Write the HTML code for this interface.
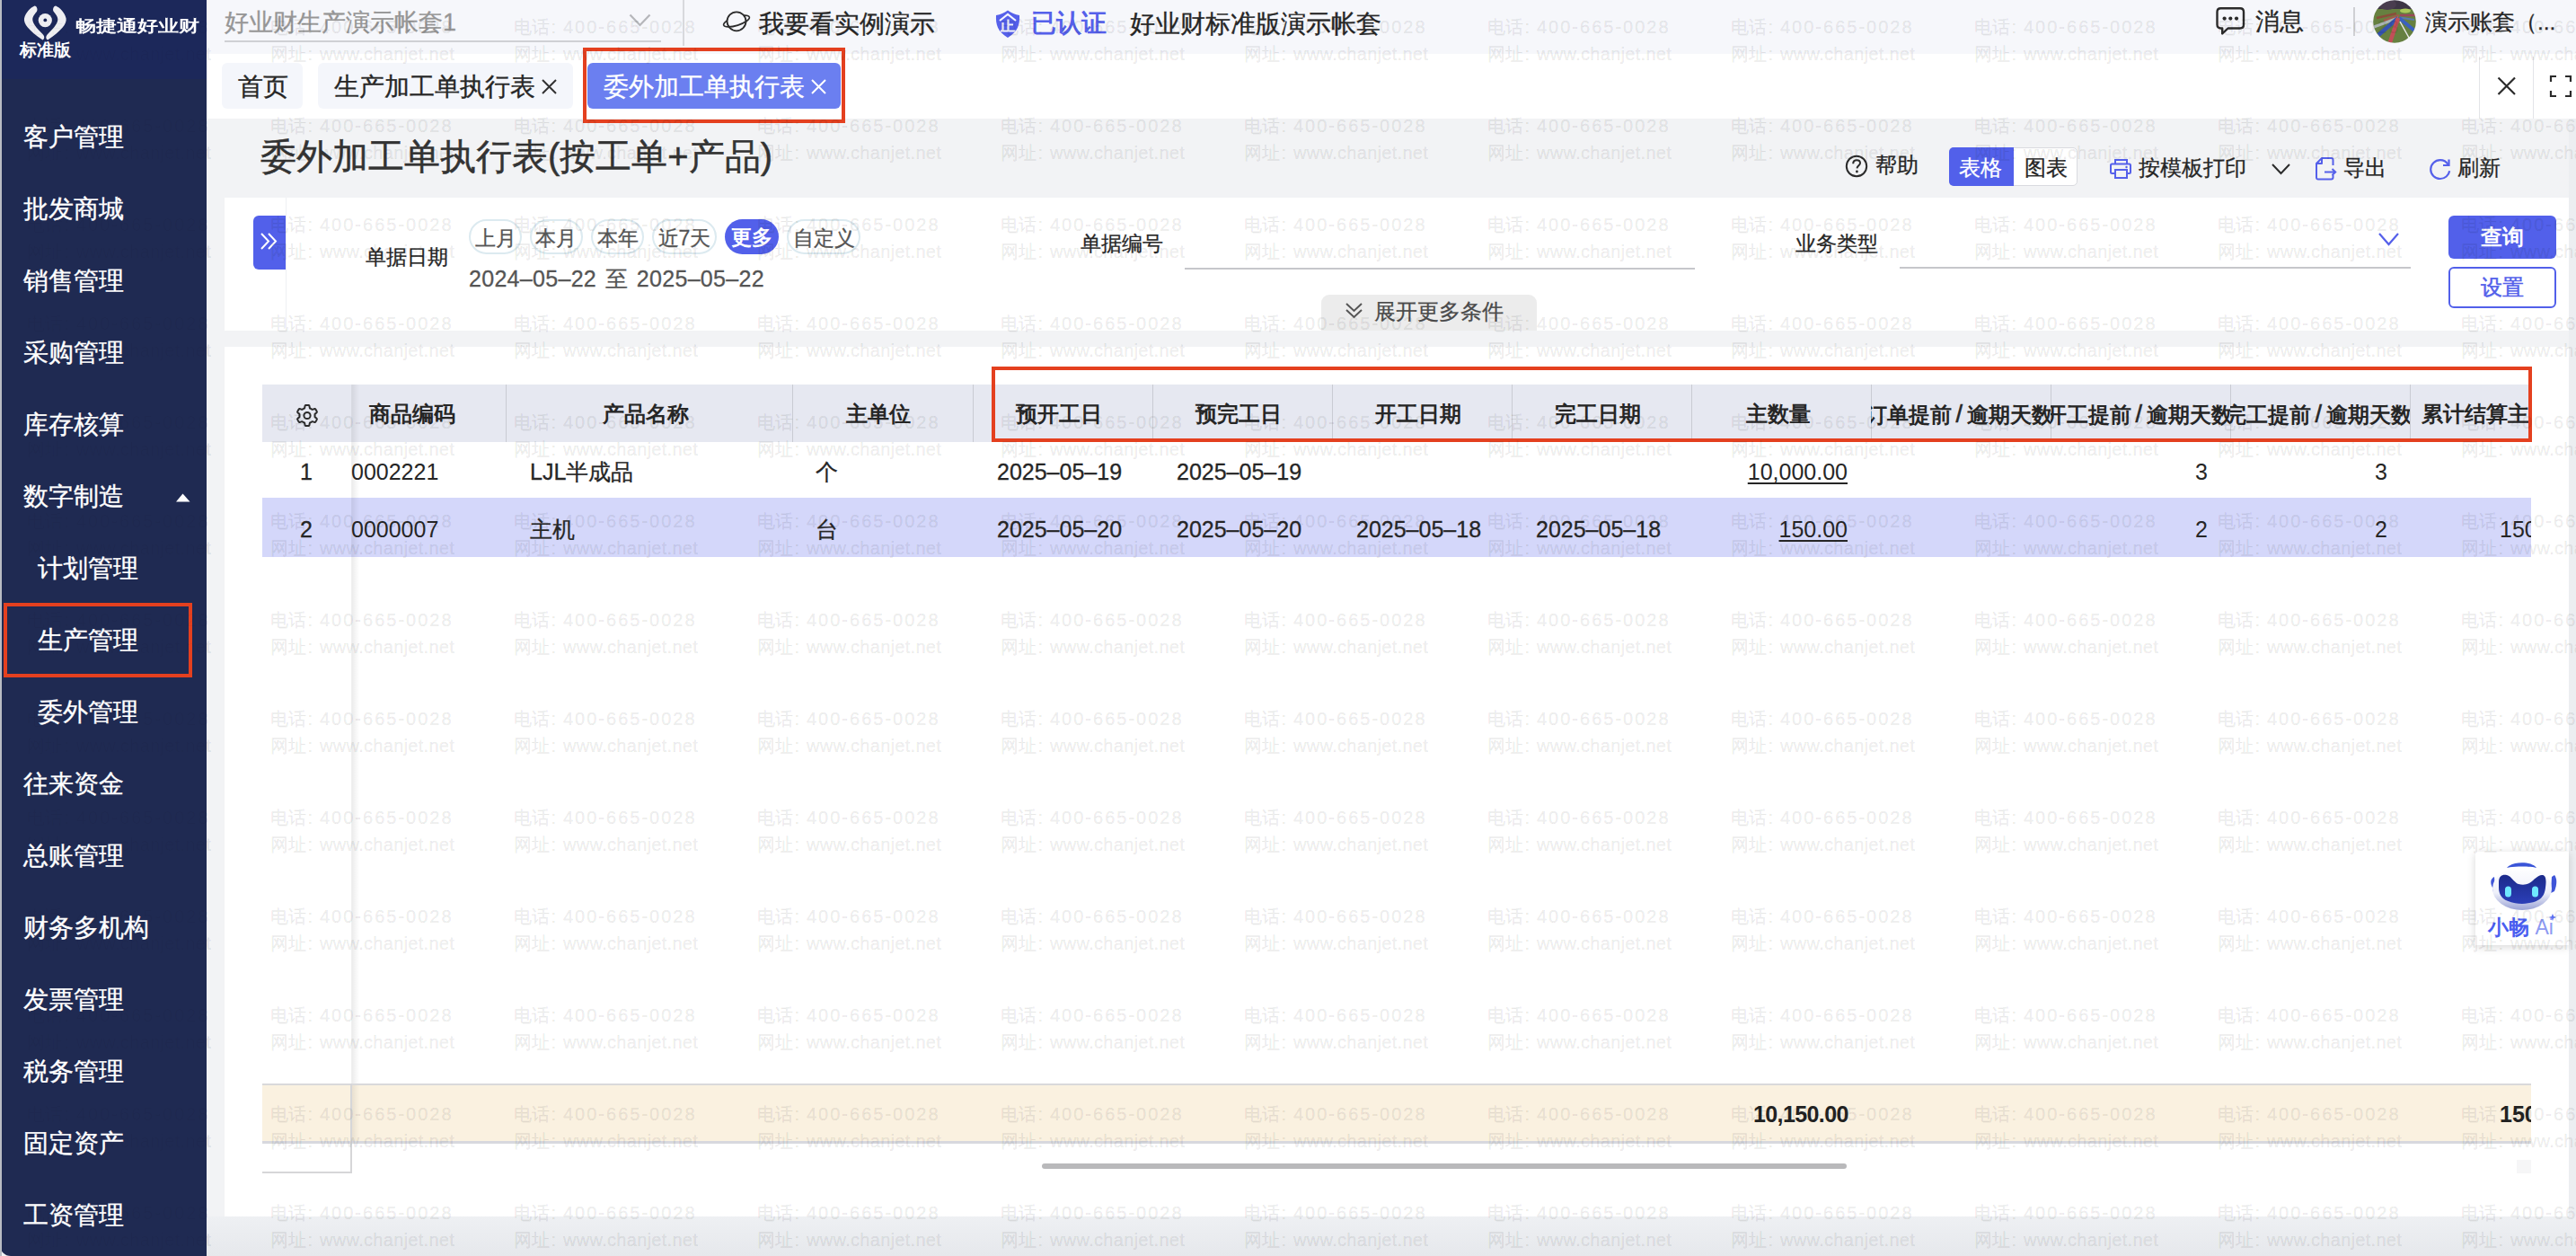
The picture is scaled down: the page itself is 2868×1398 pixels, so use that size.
<!DOCTYPE html><html><head><meta charset="utf-8"><style>
html,body{margin:0;padding:0;width:2868px;height:1398px;overflow:hidden;background:#f2f3f5;font-family:"Liberation Sans", sans-serif;}
.t{position:absolute;white-space:nowrap;}
.r{position:absolute;box-sizing:border-box;}
svg{position:absolute;overflow:visible;}
.wm{position:absolute;white-space:nowrap;font-size:20px;line-height:30px;color:rgba(0,0,0,0.07);-webkit-text-stroke:0.6px rgba(0,0,0,0.07);pointer-events:none;}
.wmc{position:absolute;left:230px;top:0;width:2638px;height:1398px;overflow:hidden;pointer-events:none;}
</style></head><body>

<div class="r" style="left:0px;top:0px;width:2868px;height:1398px;background:#f2f3f5"></div>
<div class="r" style="left:230px;top:0px;width:2638px;height:60px;background:#f6f7fb"></div>
<div class="r" style="left:230px;top:60px;width:2638px;height:72px;background:#ffffff"></div>
<div class="r" style="left:2860px;top:132px;width:8px;height:1266px;background:#eceef1"></div>
<div class="r" style="left:250px;top:220px;width:2610px;height:148px;background:#ffffff"></div>
<div class="r" style="left:250px;top:386px;width:2610px;height:968px;background:#ffffff"></div>
<div class="r" style="left:230px;top:1354px;width:2638px;height:44px;background:linear-gradient(#eef0f3,#e6e8ec)"></div>
<div class="r" style="left:0px;top:0px;width:230px;height:1398px;background:#1f2a52;border-bottom-left-radius:12px"></div>
<div class="r" style="left:0px;top:0px;width:230px;height:88px;background:#1c285a"></div>
<div class="r" style="left:0px;top:0px;width:2px;height:1398px;background:#b9bcc3"></div>
<svg style="left:0;top:0" width="230" height="88" viewBox="0 0 230 88">
<path d="M38.5 6.5 C34 8.5 28.5 14 27 20.5 C26 26.5 32 34 47.5 44.5 C49.5 43.5 50 41 48 38.5 C43 33.5 36.8 27.5 36.3 22.3 C36 18 39 15.5 41 12.7 C42.2 10.5 41.2 7 38.5 6.5 Z" fill="#eeeef2"/>
<path d="M62.1 6.5 C66.6 8.5 72.1 14 73.6 20.5 C74.6 26.5 68.6 34 53.1 44.5 C51.1 43.5 50.6 41 52.6 38.5 C57.6 33.5 63.8 27.5 64.3 22.3 C64.6 18 61.6 15.5 59.6 12.7 C58.4 10.5 59.4 7 62.1 6.5 Z" fill="#eeeef2"/>
<circle cx="50.3" cy="22.6" r="7.6" fill="#eeeef2"/><circle cx="50.3" cy="22.4" r="1.9" fill="#1b2657"/>
</svg>
<div class="t" style="left:22px;top:44px;font-size:18.5px;line-height:24px;color:#ffffff;font-weight:bold;">标准版</div>
<div class="t" style="left:84px;top:18px;font-size:22.5px;line-height:24px;color:#ffffff;font-weight:bold;letter-spacing:0px;transform:scaleY(0.78);transform-origin:0 50%">畅捷通好业财</div>
<div class="t" style="left:26px;top:133px;font-size:28px;line-height:40px;color:#ffffff;font-weight:normal;-webkit-text-stroke:0.34px #ffffff;">客户管理</div>
<div class="t" style="left:26px;top:213px;font-size:28px;line-height:40px;color:#ffffff;font-weight:normal;-webkit-text-stroke:0.34px #ffffff;">批发商城</div>
<div class="t" style="left:26px;top:293px;font-size:28px;line-height:40px;color:#ffffff;font-weight:normal;-webkit-text-stroke:0.34px #ffffff;">销售管理</div>
<div class="t" style="left:26px;top:373px;font-size:28px;line-height:40px;color:#ffffff;font-weight:normal;-webkit-text-stroke:0.34px #ffffff;">采购管理</div>
<div class="t" style="left:26px;top:453px;font-size:28px;line-height:40px;color:#ffffff;font-weight:normal;-webkit-text-stroke:0.34px #ffffff;">库存核算</div>
<div class="t" style="left:26px;top:533px;font-size:28px;line-height:40px;color:#ffffff;font-weight:normal;-webkit-text-stroke:0.34px #ffffff;">数字制造</div>
<div class="t" style="left:42px;top:613px;font-size:28px;line-height:40px;color:#ffffff;font-weight:normal;-webkit-text-stroke:0.34px #ffffff;">计划管理</div>
<div class="t" style="left:42px;top:693px;font-size:28px;line-height:40px;color:#ffffff;font-weight:normal;-webkit-text-stroke:0.34px #ffffff;">生产管理</div>
<div class="t" style="left:42px;top:773px;font-size:28px;line-height:40px;color:#ffffff;font-weight:normal;-webkit-text-stroke:0.34px #ffffff;">委外管理</div>
<div class="t" style="left:26px;top:853px;font-size:28px;line-height:40px;color:#ffffff;font-weight:normal;-webkit-text-stroke:0.34px #ffffff;">往来资金</div>
<div class="t" style="left:26px;top:933px;font-size:28px;line-height:40px;color:#ffffff;font-weight:normal;-webkit-text-stroke:0.34px #ffffff;">总账管理</div>
<div class="t" style="left:26px;top:1013px;font-size:28px;line-height:40px;color:#ffffff;font-weight:normal;-webkit-text-stroke:0.34px #ffffff;">财务多机构</div>
<div class="t" style="left:26px;top:1093px;font-size:28px;line-height:40px;color:#ffffff;font-weight:normal;-webkit-text-stroke:0.34px #ffffff;">发票管理</div>
<div class="t" style="left:26px;top:1173px;font-size:28px;line-height:40px;color:#ffffff;font-weight:normal;-webkit-text-stroke:0.34px #ffffff;">税务管理</div>
<div class="t" style="left:26px;top:1253px;font-size:28px;line-height:40px;color:#ffffff;font-weight:normal;-webkit-text-stroke:0.34px #ffffff;">固定资产</div>
<div class="t" style="left:26px;top:1333px;font-size:28px;line-height:40px;color:#ffffff;font-weight:normal;-webkit-text-stroke:0.34px #ffffff;">工资管理</div>
<svg style="left:195px;top:549px" width="18" height="10"><path d="M1 9.5 L8.5 0.5 L16.5 9.5 Z" fill="#ffffff"/></svg>
<div class="r" style="left:4px;top:671px;width:210px;height:83px;border:4px solid #e4401f"></div>
<div class="t" style="left:250px;top:5px;font-size:27px;line-height:40px;color:#969696;font-weight:normal;-webkit-text-stroke:0.32px #969696;">好业财生产演示帐套1</div>
<div class="r" style="left:250px;top:45px;width:486px;height:2px;background:#cfd0d4"></div>
<svg style="left:700px;top:15px" width="26" height="16"><path d="M1.5 1.5 L12.5 13 L23.5 1.5" fill="none" stroke="#b5b6ba" stroke-width="2.2"/></svg>
<div class="r" style="left:760px;top:0px;width:2px;height:51px;background:#d8d9dd"></div>
<svg style="left:800px;top:4px" width="40" height="40" viewBox="0 0 40 40">
<g transform="rotate(-17.5 20 19.5)"><path d="M5 19.5 A15 4.8 0 0 1 35 19.5" fill="none" stroke="#2b2b2b" stroke-width="1.7"/></g>
<circle cx="20" cy="19.8" r="10.5" fill="#f6f7fb" stroke="#2b2b2b" stroke-width="1.8"/>
<g transform="rotate(-17.5 20 19.5)"><path d="M5 19.5 A15 4.8 0 0 0 35 19.5" fill="none" stroke="#2b2b2b" stroke-width="1.7"/></g>
</svg>
<div class="t" style="left:845px;top:7px;font-size:28px;line-height:40px;color:#262626;font-weight:normal;-webkit-text-stroke:0.34px #262626;">我要看实例演示</div>
<svg style="left:1108px;top:11px" width="28" height="32" viewBox="0 0 28 32">
<path d="M14 0.5 C10 3.5 6 5 1 6 C0.5 16 2.5 24 14 31 C25.5 24 27.5 16 27 6 C22 5 18 3.5 14 0.5 Z" fill="#5560ea"/>
<path d="M5 12 L14 5 L23 12" fill="none" stroke="#f4f6ff" stroke-width="2.2"/>
<path d="M14.5 10.5 V23.5 M8.5 14 V23.5 M14.5 16.5 H20 M6 23.5 H22.5" fill="none" stroke="#f4f6ff" stroke-width="2.2"/>
</svg>
<div class="t" style="left:1148px;top:6px;font-size:28px;line-height:40px;color:#5560ea;font-weight:bold;">已认证</div>
<div class="t" style="left:1258px;top:7px;font-size:28px;line-height:40px;color:#262626;font-weight:normal;-webkit-text-stroke:0.34px #262626;">好业财标准版演示帐套</div>
<svg style="left:2466px;top:6px" width="36" height="36" viewBox="0 0 36 36">
<path d="M6.5 3.2 H28 C30.5 3.2 32 4.7 32 7.2 V21.5 C32 24 30.5 25.5 28 25.5 H14.5 L8.2 31.5 V25.5 H6.5 C4 25.5 2.5 24 2.5 21.5 V7.2 C2.5 4.7 4 3.2 6.5 3.2 Z" fill="none" stroke="#2b2b2b" stroke-width="2.4" stroke-linejoin="round"/>
<circle cx="10.6" cy="14.6" r="2.1" fill="#2b2b2b"/><circle cx="17.3" cy="14.6" r="2.1" fill="#2b2b2b"/><circle cx="24" cy="14.6" r="2.1" fill="#2b2b2b"/>
</svg>
<div class="t" style="left:2511px;top:4px;font-size:27px;line-height:40px;color:#262626;font-weight:normal;-webkit-text-stroke:0.32px #262626;">消息</div>
<div class="r" style="left:2620px;top:8px;width:2px;height:32px;background:#cfd0d4"></div>
<svg style="left:2642px;top:0px" width="48" height="48" viewBox="0 0 48 48">
<defs><clipPath id="av"><circle cx="24" cy="24" r="23.8"/></clipPath><filter id="bl"><feGaussianBlur stdDeviation="0.6"/></filter></defs>
<g clip-path="url(#av)"><g filter="url(#bl)">
<rect width="48" height="48" fill="#66803f"/>
<rect x="0" y="0" width="48" height="10" fill="#3d3444"/>
<ellipse cx="16" cy="5" rx="10" ry="6" fill="#4a3d50"/>
<ellipse cx="36" cy="12" rx="6" ry="2.5" fill="#a9c85a"/>
<path d="M26 15 L4 20" stroke="#8a4e3a" stroke-width="2.5"/>
<path d="M29 17 L12 23" stroke="#a05a48" stroke-width="2.5"/>
<path d="M30 17 L47 17" stroke="#9a4a5a" stroke-width="2.5"/>
<path d="M30 19.5 L46 22" stroke="#5a78b0" stroke-width="2"/>
<path d="M28 20 L1 30" stroke="#aab4b4" stroke-width="3"/>
<path d="M28 20 L6 39" stroke="#3553b0" stroke-width="4.5"/>
<path d="M29 20 L46 34" stroke="#3a60c0" stroke-width="4"/>
<path d="M30 24 L40 42" stroke="#e8e8e8" stroke-width="1.5"/>
<path d="M28 20 L19 47" stroke="#c25058" stroke-width="4.5"/>
</g></g></svg>
<div class="t" style="left:2700px;top:5px;font-size:24.5px;line-height:40px;color:#262626;font-weight:normal;-webkit-text-stroke:0.29px #262626;">演示账套（...</div>
<div class="r" style="left:247px;top:70px;width:90px;height:51px;background:#f4f6fb;border-radius:6px"></div>
<div class="t" style="left:265px;top:77px;font-size:28px;line-height:40px;color:#262626;font-weight:normal;-webkit-text-stroke:0.34px #262626;">首页</div>
<div class="r" style="left:354px;top:70px;width:284px;height:51px;background:#f4f6fb;border-radius:6px"></div>
<div class="t" style="left:372px;top:77px;font-size:28px;line-height:40px;color:#262626;font-weight:normal;-webkit-text-stroke:0.34px #262626;">生产加工单执行表</div>
<svg style="left:602px;top:87px" width="20" height="20"><path d="M2 2 L17 17 M17 2 L2 17" stroke="#333" stroke-width="2"/></svg>
<div class="r" style="left:654px;top:70px;width:282px;height:51px;background:#6b7ff0;border-radius:6px"></div>
<div class="t" style="left:672px;top:77px;font-size:28px;line-height:40px;color:#ffffff;font-weight:normal;-webkit-text-stroke:0.34px #ffffff;">委外加工单执行表</div>
<svg style="left:902px;top:87px" width="20" height="20"><path d="M2 2 L17 17 M17 2 L2 17" stroke="#fff" stroke-width="2"/></svg>
<div class="r" style="left:649px;top:53px;width:292px;height:84px;border:4.5px solid #e4401f"></div>
<div class="r" style="left:2760px;top:63px;width:1px;height:69px;background:#e3e4e8"></div>
<div class="r" style="left:2820px;top:63px;width:1px;height:69px;background:#e3e4e8"></div>
<svg style="left:2779px;top:84px" width="24" height="24"><path d="M2.5 2.5 L21 21 M21 2.5 L2.5 21" stroke="#2b2b2b" stroke-width="2.2"/></svg>
<svg style="left:2838px;top:83px" width="28" height="28"><path d="M2 8 V2 H8 M18 2 H24 V8 M24 18 V24 H18 M8 24 H2 V18" fill="none" stroke="#2b2b2b" stroke-width="2.2"/></svg>
<div class="t" style="left:290px;top:146px;font-size:40px;line-height:56px;color:#333;font-weight:normal;-webkit-text-stroke:0.48px #333;">委外加工单执行表(按工单+产品)</div>
<svg style="left:2054px;top:172px" width="28" height="28" viewBox="0 0 28 28">
<circle cx="13" cy="13" r="11.2" fill="none" stroke="#2b2b2b" stroke-width="2"/>
<path d="M9.2 10.3 C9.2 7.6 11 6.2 13.2 6.2 C15.4 6.2 17 7.7 17 9.6 C17 12 13.8 12.6 13.5 15.3" fill="none" stroke="#2b2b2b" stroke-width="2"/>
<circle cx="13.4" cy="19" r="1.4" fill="#2b2b2b"/>
</svg>
<div class="t" style="left:2088px;top:167px;font-size:24px;line-height:34px;color:#262626;font-weight:normal;-webkit-text-stroke:0.29px #262626;">帮助</div>
<div class="r" style="left:2170px;top:164px;width:143px;height:43px;background:#fff;border:1.5px solid #d9dadf;border-radius:5px"></div>
<div class="r" style="left:2170px;top:164px;width:72px;height:43px;background:#5260ea;border-radius:5px 0 0 5px"></div>
<div class="t" style="left:2181px;top:170px;font-size:24px;line-height:34px;color:#ffffff;font-weight:normal;-webkit-text-stroke:0.29px #ffffff;">表格</div>
<div class="t" style="left:2254px;top:170px;font-size:24px;line-height:34px;color:#262626;font-weight:normal;-webkit-text-stroke:0.29px #262626;">图表</div>
<svg style="left:2348px;top:176px" width="28" height="26" viewBox="0 0 28 26">
<path d="M7 6 V2 H20 V6" fill="none" stroke="#5560ea" stroke-width="2"/>
<path d="M6 17 H3.5 C2.5 17 2 16.5 2 15.5 V8 C2 7 2.5 6.5 3.5 6.5 H22.5 C23.5 6.5 24 7 24 8 V15.5 C24 16.5 23.5 17 22.5 17 H20" fill="none" stroke="#5560ea" stroke-width="2"/>
<rect x="7" y="13" width="13" height="9" fill="none" stroke="#5560ea" stroke-width="2"/>
<circle cx="19.5" cy="10" r="1.2" fill="#5560ea"/>
</svg>
<div class="t" style="left:2381px;top:170px;font-size:24px;line-height:34px;color:#262626;font-weight:normal;-webkit-text-stroke:0.29px #262626;">按模板打印</div>
<svg style="left:2528px;top:181px" width="24" height="16"><path d="M2 2 L11.5 12 L21 2" fill="none" stroke="#2b2b2b" stroke-width="2"/></svg>
<svg style="left:2577px;top:174px" width="26" height="28" viewBox="0 0 26 28">
<path d="M8 2 H18.5 C19.8 2 20.5 2.7 20.5 4 V10 M20.5 21 V23.5 C20.5 24.8 19.8 25.5 18.5 25.5 H4 C2.7 25.5 2 24.8 2 23.5 V8 L8 2 V8 H2" fill="none" stroke="#5560ea" stroke-width="2" stroke-linejoin="round"/>
<path d="M11 17.5 H23 M19.5 14 L23.2 17.5 L19.5 21" fill="none" stroke="#5560ea" stroke-width="2"/>
</svg>
<div class="t" style="left:2609px;top:170px;font-size:24px;line-height:34px;color:#262626;font-weight:normal;-webkit-text-stroke:0.29px #262626;">导出</div>
<svg style="left:2704px;top:176px" width="28" height="26" viewBox="0 0 28 26">
<path d="M21.5 7 C19.5 3.8 16.5 2.2 12.8 2.2 C7 2.2 2.2 6.8 2.2 12.6 C2.2 18.4 7 23 12.8 23 C18 23 22.3 19.3 23.2 14.3" fill="none" stroke="#5560ea" stroke-width="2.2"/>
<path d="M22.5 1.5 V8 H16" fill="none" stroke="#5560ea" stroke-width="2.2"/>
</svg>
<div class="t" style="left:2736px;top:170px;font-size:24px;line-height:34px;color:#262626;font-weight:normal;-webkit-text-stroke:0.29px #262626;">刷新</div>
<div class="r" style="left:318px;top:220px;width:1px;height:148px;background:#eef0f3"></div>
<div class="r" style="left:282px;top:240px;width:36px;height:60px;background:#5260ea;border-radius:6px 0 0 6px"></div>
<svg style="left:288px;top:257px" width="26" height="26"><path d="M3 3 L11 11.5 L3 20 M11 3 L19 11.5 L11 20" fill="none" stroke="#fff" stroke-width="2"/></svg>
<div class="t" style="left:407px;top:269px;font-size:23px;line-height:34px;color:#262626;font-weight:normal;-webkit-text-stroke:0.28px #262626;">单据日期</div>
<div class="r" style="left:522px;top:244px;width:59px;height:39px;border:2px solid #dceaf0;border-radius:20px"></div>
<div class="t" style="left:522px;top:246px;width:59px;text-align:center;font-size:23px;line-height:39px;color:#555;-webkit-text-stroke:0.3px #555">上月</div>
<div class="r" style="left:590px;top:244px;width:58.5px;height:39px;border:2px solid #dceaf0;border-radius:20px"></div>
<div class="t" style="left:590px;top:246px;width:58.5px;text-align:center;font-size:23px;line-height:39px;color:#555;-webkit-text-stroke:0.3px #555">本月</div>
<div class="r" style="left:658px;top:244px;width:59px;height:39px;border:2px solid #dceaf0;border-radius:20px"></div>
<div class="t" style="left:658px;top:246px;width:59px;text-align:center;font-size:23px;line-height:39px;color:#555;-webkit-text-stroke:0.3px #555">本年</div>
<div class="r" style="left:726px;top:244px;width:72px;height:39px;border:2px solid #dceaf0;border-radius:20px"></div>
<div class="t" style="left:726px;top:246px;width:72px;text-align:center;font-size:23px;line-height:39px;color:#555;-webkit-text-stroke:0.3px #555">近7天</div>
<div class="r" style="left:807px;top:244px;width:60px;height:39px;background:#5260ea;border-radius:20px"></div>
<div class="t" style="left:807px;top:245px;width:60px;text-align:center;font-size:23px;line-height:39px;color:#fff;font-weight:bold">更多</div>
<div class="r" style="left:876px;top:244px;width:82px;height:39px;border:2px solid #dceaf0;border-radius:20px"></div>
<div class="t" style="left:876px;top:246px;width:82px;text-align:center;font-size:23px;line-height:39px;color:#555;-webkit-text-stroke:0.3px #555">自定义</div>
<div class="t" style="left:522px;top:293px;font-size:25px;line-height:34px;color:#555;font-weight:normal;-webkit-text-stroke:0.30px #555;letter-spacing:0.3px;word-spacing:2.5px">2024–05–22 至 2025–05–22</div>
<div class="t" style="left:1203px;top:254px;font-size:23px;line-height:34px;color:#262626;font-weight:normal;-webkit-text-stroke:0.28px #262626;">单据编号</div>
<div class="r" style="left:1319px;top:298px;width:568px;height:2px;background:#c6c7cb"></div>
<div class="t" style="left:1999px;top:254px;font-size:23px;line-height:34px;color:#262626;font-weight:normal;-webkit-text-stroke:0.28px #262626;">业务类型</div>
<div class="r" style="left:2115px;top:297px;width:569px;height:2px;background:#c6c7cb"></div>
<svg style="left:2647px;top:258px" width="26" height="18"><path d="M2 2 L12.5 14 L23 2" fill="none" stroke="#5560ea" stroke-width="2.2"/></svg>
<div class="r" style="left:2726px;top:240px;width:120px;height:48px;background:#5260ea;border-radius:6px"></div>
<div class="t" style="left:2726px;top:240px;width:120px;text-align:center;font-size:24px;line-height:48px;color:#fff;font-weight:bold">查询</div>
<div class="r" style="left:2726px;top:297px;width:120px;height:46px;border:2px solid #5260ea;border-radius:6px;background:#fff"></div>
<div class="t" style="left:2726px;top:297px;width:120px;text-align:center;font-size:24px;line-height:46px;color:#5260ea;-webkit-text-stroke:0.5px #5260ea">设置</div>
<div class="r" style="left:1471px;top:328px;width:240px;height:40px;background:#ececec;border-radius:9px 9px 0 0"></div>
<svg style="left:1495px;top:334px" width="26" height="26"><path d="M4 4 L12.5 12 L21 4 M4 11 L12.5 19 L21 11" fill="none" stroke="#555" stroke-width="2"/></svg>
<div class="t" style="left:1530px;top:330px;font-size:24px;line-height:34px;color:#4a4a4a;font-weight:normal;-webkit-text-stroke:0.29px #4a4a4a;">展开更多条件</div>
<div class="r" style="left:292px;top:428px;width:2526px;height:64px;background:#e6e8f1"></div>
<div class="r" style="left:292px;top:492px;width:2526px;height:62px;background:#ffffff"></div>
<div class="r" style="left:292px;top:554px;width:2526px;height:66px;background:#d4d7fa"></div>
<div class="r" style="left:563px;top:428px;width:1px;height:64px;background:#c9cbd3"></div>
<div class="r" style="left:882px;top:428px;width:1px;height:64px;background:#c9cbd3"></div>
<div class="r" style="left:1083px;top:428px;width:1px;height:64px;background:#c9cbd3"></div>
<div class="r" style="left:1283px;top:428px;width:1px;height:64px;background:#c9cbd3"></div>
<div class="r" style="left:1483px;top:428px;width:1px;height:64px;background:#c9cbd3"></div>
<div class="r" style="left:1683px;top:428px;width:1px;height:64px;background:#c9cbd3"></div>
<div class="r" style="left:1883px;top:428px;width:1px;height:64px;background:#c9cbd3"></div>
<div class="r" style="left:2083px;top:428px;width:1px;height:64px;background:#c9cbd3"></div>
<div class="r" style="left:2283px;top:428px;width:1px;height:64px;background:#c9cbd3"></div>
<div class="r" style="left:2483px;top:428px;width:1px;height:64px;background:#c9cbd3"></div>
<div class="r" style="left:2683px;top:428px;width:1px;height:64px;background:#c9cbd3"></div>
<div class="t" style="left:411px;top:444px;font-size:24px;line-height:34px;color:#262626;font-weight:bold;">商品编码</div>
<div class="t" style="left:671px;top:444px;font-size:24px;line-height:34px;color:#262626;font-weight:bold;">产品名称</div>
<div class="t" style="left:942px;top:444px;font-size:24px;line-height:34px;color:#262626;font-weight:bold;">主单位</div>
<div class="t" style="left:1131px;top:444px;font-size:24px;line-height:34px;color:#262626;font-weight:bold;">预开工日</div>
<div class="t" style="left:1331px;top:444px;font-size:24px;line-height:34px;color:#262626;font-weight:bold;">预完工日</div>
<div class="t" style="left:1531px;top:444px;font-size:24px;line-height:34px;color:#262626;font-weight:bold;">开工日期</div>
<div class="t" style="left:1731px;top:444px;font-size:24px;line-height:34px;color:#262626;font-weight:bold;">完工日期</div>
<div class="t" style="left:1944px;top:444px;font-size:24px;line-height:34px;color:#262626;font-weight:bold;">主数量</div>
<div class="r" style="left:2083px;top:444px;width:200px;height:34px;overflow:hidden"><div class="t" style="left:-6px;top:0;font-size:24px;line-height:34px;color:#262626;font-weight:bold;">订单提前<span style="display:inline-block;width:16.7px;text-align:center;font-size:27px;font-weight:normal;-webkit-text-stroke:0.6px #262626">/</span>逾期天数</div></div>
<div class="r" style="left:2283px;top:444px;width:200px;height:34px;overflow:hidden"><div class="t" style="left:-6px;top:0;font-size:24px;line-height:34px;color:#262626;font-weight:bold;">开工提前<span style="display:inline-block;width:16.7px;text-align:center;font-size:27px;font-weight:normal;-webkit-text-stroke:0.6px #262626">/</span>逾期天数</div></div>
<div class="r" style="left:2483px;top:444px;width:200px;height:34px;overflow:hidden"><div class="t" style="left:-6px;top:0;font-size:24px;line-height:34px;color:#262626;font-weight:bold;">完工提前<span style="display:inline-block;width:16.7px;text-align:center;font-size:27px;font-weight:normal;-webkit-text-stroke:0.6px #262626">/</span>逾期天数</div></div>
<div class="r" style="left:2683px;top:444px;width:135px;height:34px;overflow:hidden"><div class="t" style="left:13px;top:0;font-size:24px;line-height:34px;color:#262626;font-weight:bold;">累计结算主数量</div></div>
<svg style="left:328px;top:448px" width="28" height="28" viewBox="0 0 28 28">
<path d="M12.19 3.04 L12.49 3.00 L12.79 2.96 L13.09 2.94 L13.39 2.92 L13.70 2.90 L14.00 2.90 L14.30 2.90 L14.61 2.92 L14.91 2.94 L15.21 2.96 L15.51 3.00 L15.81 3.04 L16.09 3.21 L16.32 3.58 L16.49 4.12 L16.61 4.74 L16.71 5.37 L16.79 5.90 L16.91 6.29 L17.08 6.47 L17.29 6.55 L17.50 6.64 L17.70 6.74 L17.90 6.84 L18.10 6.94 L18.30 7.05 L18.49 7.17 L18.68 7.29 L18.87 7.41 L19.05 7.54 L19.24 7.68 L19.41 7.82 L19.66 7.87 L20.05 7.78 L20.56 7.59 L21.14 7.36 L21.74 7.15 L22.29 7.03 L22.73 7.04 L23.01 7.20 L23.20 7.44 L23.38 7.68 L23.56 7.93 L23.73 8.18 L23.89 8.44 L24.05 8.70 L24.19 8.96 L24.34 9.23 L24.47 9.51 L24.60 9.78 L24.72 10.06 L24.83 10.34 L24.83 10.67 L24.61 11.05 L24.23 11.47 L23.76 11.89 L23.26 12.28 L22.84 12.62 L22.57 12.91 L22.49 13.15 L22.53 13.38 L22.55 13.60 L22.57 13.83 L22.59 14.05 L22.60 14.27 L22.60 14.50 L22.60 14.73 L22.59 14.95 L22.57 15.17 L22.55 15.40 L22.53 15.62 L22.49 15.85 L22.57 16.09 L22.84 16.38 L23.26 16.72 L23.76 17.11 L24.23 17.53 L24.61 17.95 L24.83 18.33 L24.83 18.66 L24.72 18.94 L24.60 19.22 L24.47 19.49 L24.34 19.77 L24.19 20.04 L24.05 20.30 L23.89 20.56 L23.73 20.82 L23.56 21.07 L23.38 21.32 L23.20 21.56 L23.01 21.80 L22.73 21.96 L22.29 21.97 L21.74 21.85 L21.14 21.64 L20.56 21.41 L20.05 21.22 L19.66 21.13 L19.41 21.18 L19.24 21.32 L19.05 21.46 L18.87 21.59 L18.68 21.71 L18.49 21.83 L18.30 21.95 L18.10 22.06 L17.90 22.16 L17.70 22.26 L17.50 22.36 L17.29 22.45 L17.08 22.53 L16.91 22.71 L16.79 23.10 L16.71 23.63 L16.61 24.26 L16.49 24.88 L16.32 25.42 L16.09 25.79 L15.81 25.96 L15.51 26.00 L15.21 26.04 L14.91 26.06 L14.61 26.08 L14.30 26.10 L14.00 26.10 L13.70 26.10 L13.39 26.08 L13.09 26.06 L12.79 26.04 L12.49 26.00 L12.19 25.96 L11.91 25.79 L11.68 25.42 L11.51 24.88 L11.39 24.26 L11.29 23.63 L11.21 23.10 L11.09 22.71 L10.92 22.53 L10.71 22.45 L10.50 22.36 L10.30 22.26 L10.10 22.16 L9.90 22.06 L9.70 21.95 L9.51 21.83 L9.32 21.71 L9.13 21.59 L8.95 21.46 L8.76 21.32 L8.59 21.18 L8.34 21.13 L7.95 21.22 L7.44 21.41 L6.86 21.64 L6.26 21.85 L5.71 21.97 L5.27 21.96 L4.99 21.80 L4.80 21.56 L4.62 21.32 L4.44 21.07 L4.27 20.82 L4.11 20.56 L3.95 20.30 L3.81 20.04 L3.66 19.77 L3.53 19.49 L3.40 19.22 L3.28 18.94 L3.17 18.66 L3.17 18.33 L3.39 17.95 L3.77 17.53 L4.24 17.11 L4.74 16.72 L5.16 16.38 L5.43 16.09 L5.51 15.85 L5.47 15.62 L5.45 15.40 L5.43 15.17 L5.41 14.95 L5.40 14.73 L5.40 14.50 L5.40 14.27 L5.41 14.05 L5.43 13.83 L5.45 13.60 L5.47 13.38 L5.51 13.15 L5.43 12.91 L5.16 12.62 L4.74 12.28 L4.24 11.89 L3.77 11.47 L3.39 11.05 L3.17 10.67 L3.17 10.34 L3.28 10.06 L3.40 9.78 L3.53 9.51 L3.66 9.23 L3.81 8.96 L3.95 8.70 L4.11 8.44 L4.27 8.18 L4.44 7.93 L4.62 7.68 L4.80 7.44 L4.99 7.20 L5.27 7.04 L5.71 7.03 L6.26 7.15 L6.86 7.36 L7.44 7.59 L7.95 7.78 L8.34 7.87 L8.59 7.82 L8.76 7.68 L8.95 7.54 L9.13 7.41 L9.32 7.29 L9.51 7.17 L9.70 7.05 L9.90 6.94 L10.10 6.84 L10.30 6.74 L10.50 6.64 L10.71 6.55 L10.92 6.47 L11.09 6.29 L11.21 5.90 L11.29 5.37 L11.39 4.74 L11.51 4.12 L11.68 3.58 L11.91 3.21 Z" fill="none" stroke="#2b2b2b" stroke-width="2" stroke-linejoin="round"/>
<circle cx="14" cy="14.5" r="3.6" fill="none" stroke="#2b2b2b" stroke-width="2"/>
</svg>
<div class="t" style="left:334px;top:508px;font-size:25px;line-height:34px;color:#262626;font-weight:normal;-webkit-text-stroke:0.30px #262626;">1</div>
<div class="r" style="left:390px;top:508px;width:173px;height:34px;overflow:hidden"><div class="t" style="left:1px;top:0;font-size:25px;line-height:34px;color:#262626;font-weight:normal;">0002221</div></div>
<div class="t" style="left:590px;top:508px;font-size:25px;line-height:34px;color:#262626;font-weight:normal;-webkit-text-stroke:0.30px #262626;">LJL半成品</div>
<div class="t" style="left:908px;top:508px;font-size:25px;line-height:34px;color:#262626;font-weight:normal;-webkit-text-stroke:0.30px #262626;">个</div>
<div class="t" style="left:1110px;top:508px;font-size:25px;line-height:34px;color:#262626;font-weight:normal;-webkit-text-stroke:0.30px #262626;">2025–05–19</div>
<div class="t" style="left:1310px;top:508px;font-size:25px;line-height:34px;color:#262626;font-weight:normal;-webkit-text-stroke:0.30px #262626;">2025–05–19</div>
<div class="t" style="left:1883px;top:508px;width:174px;text-align:right;font-size:25px;line-height:34px;color:#262626;text-decoration:underline;text-underline-offset:3px">10,000.00</div>
<div class="t" style="left:2283px;top:508px;width:175px;text-align:right;font-size:25px;line-height:34px;color:#262626">3</div>
<div class="t" style="left:2483px;top:508px;width:175px;text-align:right;font-size:25px;line-height:34px;color:#262626">3</div>
<div class="t" style="left:334px;top:572px;font-size:25px;line-height:34px;color:#262626;font-weight:normal;-webkit-text-stroke:0.30px #262626;">2</div>
<div class="r" style="left:390px;top:572px;width:173px;height:34px;overflow:hidden"><div class="t" style="left:1px;top:0;font-size:25px;line-height:34px;color:#262626;font-weight:normal;">0000007</div></div>
<div class="t" style="left:590px;top:572px;font-size:25px;line-height:34px;color:#262626;font-weight:normal;-webkit-text-stroke:0.30px #262626;">主机</div>
<div class="t" style="left:908px;top:572px;font-size:25px;line-height:34px;color:#262626;font-weight:normal;-webkit-text-stroke:0.30px #262626;">台</div>
<div class="t" style="left:1110px;top:572px;font-size:25px;line-height:34px;color:#262626;font-weight:normal;-webkit-text-stroke:0.30px #262626;">2025–05–20</div>
<div class="t" style="left:1310px;top:572px;font-size:25px;line-height:34px;color:#262626;font-weight:normal;-webkit-text-stroke:0.30px #262626;">2025–05–20</div>
<div class="t" style="left:1510px;top:572px;font-size:25px;line-height:34px;color:#262626;font-weight:normal;-webkit-text-stroke:0.30px #262626;">2025–05–18</div>
<div class="t" style="left:1710px;top:572px;font-size:25px;line-height:34px;color:#262626;font-weight:normal;-webkit-text-stroke:0.30px #262626;">2025–05–18</div>
<div class="t" style="left:1883px;top:572px;width:174px;text-align:right;font-size:25px;line-height:34px;color:#262626;text-decoration:underline;text-underline-offset:3px">150.00</div>
<div class="t" style="left:2283px;top:572px;width:175px;text-align:right;font-size:25px;line-height:34px;color:#262626">2</div>
<div class="t" style="left:2483px;top:572px;width:175px;text-align:right;font-size:25px;line-height:34px;color:#262626">2</div>
<div class="r" style="left:2683px;top:572px;width:135px;height:34px;overflow:hidden"><div class="t" style="left:100px;top:0;font-size:25px;line-height:34px;color:#262626;font-weight:normal;">150</div></div>
<div class="r" style="left:392px;top:428px;width:8px;height:844px;background:linear-gradient(90deg,rgba(0,0,0,0.075),rgba(0,0,0,0))"></div>
<div class="r" style="left:391px;top:428px;width:1px;height:844px;background:rgba(0,0,0,0.06)"></div>
<div class="r" style="left:292px;top:1206px;width:2526px;height:2px;background:#d9d9db"></div>
<div class="r" style="left:292px;top:1208px;width:2526px;height:62px;background:#faf1e0"></div>
<div class="r" style="left:392px;top:1208px;width:8px;height:62px;background:linear-gradient(90deg,rgba(0,0,0,0.07),rgba(0,0,0,0))"></div>
<div class="r" style="left:292px;top:1270px;width:2526px;height:3px;background:#d7d8de"></div>
<div class="t" style="left:1952px;top:1223px;font-size:25px;line-height:34px;color:#222;font-weight:bold;letter-spacing:-0.6px">10,150.00</div>
<div class="r" style="left:2683px;top:1223px;width:135px;height:34px;overflow:hidden"><div class="t" style="left:100px;top:0;font-size:25px;line-height:34px;color:#222;font-weight:bold;">150</div></div>
<div class="r" style="left:390px;top:1206px;width:2px;height:100px;background:#d6d6d8"></div>
<div class="r" style="left:292px;top:1304px;width:100px;height:2px;background:#d6d6d8"></div>
<div class="r" style="left:1160px;top:1295px;width:896px;height:6px;background:#b9b9bb;border-radius:3px"></div>
<div class="r" style="left:2802px;top:1291px;width:16px;height:15px;background:#f6f6f7"></div>
<div class="r" style="left:1104px;top:408px;width:1715px;height:84px;border:4.5px solid #e4401f"></div>
<div class="r" style="left:2756px;top:948px;width:104px;height:104px;background:#fff;box-shadow:0 2px 9px rgba(0,0,0,0.16)"></div>
<svg style="left:2756px;top:948px" width="104" height="104" viewBox="0 0 104 104">
<defs><linearGradient id="hg" x1="0" y1="0" x2="0" y2="1"><stop offset="0" stop-color="#ffffff"/><stop offset="0.6" stop-color="#eef0fa"/><stop offset="1" stop-color="#9aa3d6"/></linearGradient>
<linearGradient id="vg" x1="0" y1="0" x2="0" y2="1"><stop offset="0" stop-color="#1b2a8a"/><stop offset="1" stop-color="#2b3fb8"/></linearGradient>
<linearGradient id="tg" x1="0" y1="0" x2="1" y2="0"><stop offset="0" stop-color="#4a5ef0"/><stop offset="0.6" stop-color="#5a6ff2"/><stop offset="1" stop-color="#b4bdf5"/></linearGradient></defs>
<path d="M19 40 C16 34 17 30 21 28 L23 48 C20 46 19 43 19 40 Z" fill="#3f55d8"/>
<path d="M88 26 C91 30 91 36 88 44 L84 46 L85 28 Z" fill="#3f55d8"/>
<ellipse cx="52" cy="41" rx="33" ry="24" fill="url(#hg)"/>
<path d="M35 18 C40 11 62 10 68 18 C62 16 42 16 35 18 Z" fill="#3a55d8"/>
<path d="M26 34 C26 27 30 25 35 26 C40 27 43 34 48 36 C52 37 56 37 60 35 C66 31 70 25 75 26 C79 27 79 33 78 40 C77 50 72 57 52 58 C32 57 26 50 26 40 Z" fill="url(#vg)"/>
<rect x="33" y="38.5" width="7" height="12" rx="3.5" fill="#6fe8ff"/>
<rect x="63" y="38.5" width="7" height="12" rx="3.5" fill="#6fe8ff"/>
<path d="M86 69 L87.2 72 L90.2 73 L87.2 74 L86 77 L84.8 74 L81.8 73 L84.8 72 Z" fill="#5a6ff2"/>
</svg>
<div class="t" style="left:2770px;top:1017px;font-size:23px;line-height:30px;font-weight:bold;color:#4a5ef0;letter-spacing:0px">小畅 <span style="font-weight:normal;color:#8d9af2">Ai</span></div>
<div class="wmc">
<div class="wm" style="left:-200.5px;top:14.6px">电话<span style="display:inline-block;width:15.5px;padding-left:2px;box-sizing:border-box">:</span><span style="letter-spacing:2.0px">400-665-0028</span><br>网址<span style="display:inline-block;width:15.5px;padding-left:2px;box-sizing:border-box">:</span><span style="letter-spacing:0.3px">www.chanjet.net</span></div>
<div class="wm" style="left:70.5px;top:14.6px">电话<span style="display:inline-block;width:15.5px;padding-left:2px;box-sizing:border-box">:</span><span style="letter-spacing:2.0px">400-665-0028</span><br>网址<span style="display:inline-block;width:15.5px;padding-left:2px;box-sizing:border-box">:</span><span style="letter-spacing:0.3px">www.chanjet.net</span></div>
<div class="wm" style="left:341.5px;top:14.6px">电话<span style="display:inline-block;width:15.5px;padding-left:2px;box-sizing:border-box">:</span><span style="letter-spacing:2.0px">400-665-0028</span><br>网址<span style="display:inline-block;width:15.5px;padding-left:2px;box-sizing:border-box">:</span><span style="letter-spacing:0.3px">www.chanjet.net</span></div>
<div class="wm" style="left:612.5px;top:14.6px">电话<span style="display:inline-block;width:15.5px;padding-left:2px;box-sizing:border-box">:</span><span style="letter-spacing:2.0px">400-665-0028</span><br>网址<span style="display:inline-block;width:15.5px;padding-left:2px;box-sizing:border-box">:</span><span style="letter-spacing:0.3px">www.chanjet.net</span></div>
<div class="wm" style="left:883.5px;top:14.6px">电话<span style="display:inline-block;width:15.5px;padding-left:2px;box-sizing:border-box">:</span><span style="letter-spacing:2.0px">400-665-0028</span><br>网址<span style="display:inline-block;width:15.5px;padding-left:2px;box-sizing:border-box">:</span><span style="letter-spacing:0.3px">www.chanjet.net</span></div>
<div class="wm" style="left:1154.5px;top:14.6px">电话<span style="display:inline-block;width:15.5px;padding-left:2px;box-sizing:border-box">:</span><span style="letter-spacing:2.0px">400-665-0028</span><br>网址<span style="display:inline-block;width:15.5px;padding-left:2px;box-sizing:border-box">:</span><span style="letter-spacing:0.3px">www.chanjet.net</span></div>
<div class="wm" style="left:1425.5px;top:14.6px">电话<span style="display:inline-block;width:15.5px;padding-left:2px;box-sizing:border-box">:</span><span style="letter-spacing:2.0px">400-665-0028</span><br>网址<span style="display:inline-block;width:15.5px;padding-left:2px;box-sizing:border-box">:</span><span style="letter-spacing:0.3px">www.chanjet.net</span></div>
<div class="wm" style="left:1696.5px;top:14.6px">电话<span style="display:inline-block;width:15.5px;padding-left:2px;box-sizing:border-box">:</span><span style="letter-spacing:2.0px">400-665-0028</span><br>网址<span style="display:inline-block;width:15.5px;padding-left:2px;box-sizing:border-box">:</span><span style="letter-spacing:0.3px">www.chanjet.net</span></div>
<div class="wm" style="left:1967.5px;top:14.6px">电话<span style="display:inline-block;width:15.5px;padding-left:2px;box-sizing:border-box">:</span><span style="letter-spacing:2.0px">400-665-0028</span><br>网址<span style="display:inline-block;width:15.5px;padding-left:2px;box-sizing:border-box">:</span><span style="letter-spacing:0.3px">www.chanjet.net</span></div>
<div class="wm" style="left:2238.5px;top:14.6px">电话<span style="display:inline-block;width:15.5px;padding-left:2px;box-sizing:border-box">:</span><span style="letter-spacing:2.0px">400-665-0028</span><br>网址<span style="display:inline-block;width:15.5px;padding-left:2px;box-sizing:border-box">:</span><span style="letter-spacing:0.3px">www.chanjet.net</span></div>
<div class="wm" style="left:2509.5px;top:14.6px">电话<span style="display:inline-block;width:15.5px;padding-left:2px;box-sizing:border-box">:</span><span style="letter-spacing:2.0px">400-665-0028</span><br>网址<span style="display:inline-block;width:15.5px;padding-left:2px;box-sizing:border-box">:</span><span style="letter-spacing:0.3px">www.chanjet.net</span></div>
<div class="wm" style="left:-200.5px;top:124.6px">电话<span style="display:inline-block;width:15.5px;padding-left:2px;box-sizing:border-box">:</span><span style="letter-spacing:2.0px">400-665-0028</span><br>网址<span style="display:inline-block;width:15.5px;padding-left:2px;box-sizing:border-box">:</span><span style="letter-spacing:0.3px">www.chanjet.net</span></div>
<div class="wm" style="left:70.5px;top:124.6px">电话<span style="display:inline-block;width:15.5px;padding-left:2px;box-sizing:border-box">:</span><span style="letter-spacing:2.0px">400-665-0028</span><br>网址<span style="display:inline-block;width:15.5px;padding-left:2px;box-sizing:border-box">:</span><span style="letter-spacing:0.3px">www.chanjet.net</span></div>
<div class="wm" style="left:341.5px;top:124.6px">电话<span style="display:inline-block;width:15.5px;padding-left:2px;box-sizing:border-box">:</span><span style="letter-spacing:2.0px">400-665-0028</span><br>网址<span style="display:inline-block;width:15.5px;padding-left:2px;box-sizing:border-box">:</span><span style="letter-spacing:0.3px">www.chanjet.net</span></div>
<div class="wm" style="left:612.5px;top:124.6px">电话<span style="display:inline-block;width:15.5px;padding-left:2px;box-sizing:border-box">:</span><span style="letter-spacing:2.0px">400-665-0028</span><br>网址<span style="display:inline-block;width:15.5px;padding-left:2px;box-sizing:border-box">:</span><span style="letter-spacing:0.3px">www.chanjet.net</span></div>
<div class="wm" style="left:883.5px;top:124.6px">电话<span style="display:inline-block;width:15.5px;padding-left:2px;box-sizing:border-box">:</span><span style="letter-spacing:2.0px">400-665-0028</span><br>网址<span style="display:inline-block;width:15.5px;padding-left:2px;box-sizing:border-box">:</span><span style="letter-spacing:0.3px">www.chanjet.net</span></div>
<div class="wm" style="left:1154.5px;top:124.6px">电话<span style="display:inline-block;width:15.5px;padding-left:2px;box-sizing:border-box">:</span><span style="letter-spacing:2.0px">400-665-0028</span><br>网址<span style="display:inline-block;width:15.5px;padding-left:2px;box-sizing:border-box">:</span><span style="letter-spacing:0.3px">www.chanjet.net</span></div>
<div class="wm" style="left:1425.5px;top:124.6px">电话<span style="display:inline-block;width:15.5px;padding-left:2px;box-sizing:border-box">:</span><span style="letter-spacing:2.0px">400-665-0028</span><br>网址<span style="display:inline-block;width:15.5px;padding-left:2px;box-sizing:border-box">:</span><span style="letter-spacing:0.3px">www.chanjet.net</span></div>
<div class="wm" style="left:1696.5px;top:124.6px">电话<span style="display:inline-block;width:15.5px;padding-left:2px;box-sizing:border-box">:</span><span style="letter-spacing:2.0px">400-665-0028</span><br>网址<span style="display:inline-block;width:15.5px;padding-left:2px;box-sizing:border-box">:</span><span style="letter-spacing:0.3px">www.chanjet.net</span></div>
<div class="wm" style="left:1967.5px;top:124.6px">电话<span style="display:inline-block;width:15.5px;padding-left:2px;box-sizing:border-box">:</span><span style="letter-spacing:2.0px">400-665-0028</span><br>网址<span style="display:inline-block;width:15.5px;padding-left:2px;box-sizing:border-box">:</span><span style="letter-spacing:0.3px">www.chanjet.net</span></div>
<div class="wm" style="left:2238.5px;top:124.6px">电话<span style="display:inline-block;width:15.5px;padding-left:2px;box-sizing:border-box">:</span><span style="letter-spacing:2.0px">400-665-0028</span><br>网址<span style="display:inline-block;width:15.5px;padding-left:2px;box-sizing:border-box">:</span><span style="letter-spacing:0.3px">www.chanjet.net</span></div>
<div class="wm" style="left:2509.5px;top:124.6px">电话<span style="display:inline-block;width:15.5px;padding-left:2px;box-sizing:border-box">:</span><span style="letter-spacing:2.0px">400-665-0028</span><br>网址<span style="display:inline-block;width:15.5px;padding-left:2px;box-sizing:border-box">:</span><span style="letter-spacing:0.3px">www.chanjet.net</span></div>
<div class="wm" style="left:-200.5px;top:234.6px">电话<span style="display:inline-block;width:15.5px;padding-left:2px;box-sizing:border-box">:</span><span style="letter-spacing:2.0px">400-665-0028</span><br>网址<span style="display:inline-block;width:15.5px;padding-left:2px;box-sizing:border-box">:</span><span style="letter-spacing:0.3px">www.chanjet.net</span></div>
<div class="wm" style="left:70.5px;top:234.6px">电话<span style="display:inline-block;width:15.5px;padding-left:2px;box-sizing:border-box">:</span><span style="letter-spacing:2.0px">400-665-0028</span><br>网址<span style="display:inline-block;width:15.5px;padding-left:2px;box-sizing:border-box">:</span><span style="letter-spacing:0.3px">www.chanjet.net</span></div>
<div class="wm" style="left:341.5px;top:234.6px">电话<span style="display:inline-block;width:15.5px;padding-left:2px;box-sizing:border-box">:</span><span style="letter-spacing:2.0px">400-665-0028</span><br>网址<span style="display:inline-block;width:15.5px;padding-left:2px;box-sizing:border-box">:</span><span style="letter-spacing:0.3px">www.chanjet.net</span></div>
<div class="wm" style="left:612.5px;top:234.6px">电话<span style="display:inline-block;width:15.5px;padding-left:2px;box-sizing:border-box">:</span><span style="letter-spacing:2.0px">400-665-0028</span><br>网址<span style="display:inline-block;width:15.5px;padding-left:2px;box-sizing:border-box">:</span><span style="letter-spacing:0.3px">www.chanjet.net</span></div>
<div class="wm" style="left:883.5px;top:234.6px">电话<span style="display:inline-block;width:15.5px;padding-left:2px;box-sizing:border-box">:</span><span style="letter-spacing:2.0px">400-665-0028</span><br>网址<span style="display:inline-block;width:15.5px;padding-left:2px;box-sizing:border-box">:</span><span style="letter-spacing:0.3px">www.chanjet.net</span></div>
<div class="wm" style="left:1154.5px;top:234.6px">电话<span style="display:inline-block;width:15.5px;padding-left:2px;box-sizing:border-box">:</span><span style="letter-spacing:2.0px">400-665-0028</span><br>网址<span style="display:inline-block;width:15.5px;padding-left:2px;box-sizing:border-box">:</span><span style="letter-spacing:0.3px">www.chanjet.net</span></div>
<div class="wm" style="left:1425.5px;top:234.6px">电话<span style="display:inline-block;width:15.5px;padding-left:2px;box-sizing:border-box">:</span><span style="letter-spacing:2.0px">400-665-0028</span><br>网址<span style="display:inline-block;width:15.5px;padding-left:2px;box-sizing:border-box">:</span><span style="letter-spacing:0.3px">www.chanjet.net</span></div>
<div class="wm" style="left:1696.5px;top:234.6px">电话<span style="display:inline-block;width:15.5px;padding-left:2px;box-sizing:border-box">:</span><span style="letter-spacing:2.0px">400-665-0028</span><br>网址<span style="display:inline-block;width:15.5px;padding-left:2px;box-sizing:border-box">:</span><span style="letter-spacing:0.3px">www.chanjet.net</span></div>
<div class="wm" style="left:1967.5px;top:234.6px">电话<span style="display:inline-block;width:15.5px;padding-left:2px;box-sizing:border-box">:</span><span style="letter-spacing:2.0px">400-665-0028</span><br>网址<span style="display:inline-block;width:15.5px;padding-left:2px;box-sizing:border-box">:</span><span style="letter-spacing:0.3px">www.chanjet.net</span></div>
<div class="wm" style="left:2238.5px;top:234.6px">电话<span style="display:inline-block;width:15.5px;padding-left:2px;box-sizing:border-box">:</span><span style="letter-spacing:2.0px">400-665-0028</span><br>网址<span style="display:inline-block;width:15.5px;padding-left:2px;box-sizing:border-box">:</span><span style="letter-spacing:0.3px">www.chanjet.net</span></div>
<div class="wm" style="left:2509.5px;top:234.6px">电话<span style="display:inline-block;width:15.5px;padding-left:2px;box-sizing:border-box">:</span><span style="letter-spacing:2.0px">400-665-0028</span><br>网址<span style="display:inline-block;width:15.5px;padding-left:2px;box-sizing:border-box">:</span><span style="letter-spacing:0.3px">www.chanjet.net</span></div>
<div class="wm" style="left:-200.5px;top:344.6px">电话<span style="display:inline-block;width:15.5px;padding-left:2px;box-sizing:border-box">:</span><span style="letter-spacing:2.0px">400-665-0028</span><br>网址<span style="display:inline-block;width:15.5px;padding-left:2px;box-sizing:border-box">:</span><span style="letter-spacing:0.3px">www.chanjet.net</span></div>
<div class="wm" style="left:70.5px;top:344.6px">电话<span style="display:inline-block;width:15.5px;padding-left:2px;box-sizing:border-box">:</span><span style="letter-spacing:2.0px">400-665-0028</span><br>网址<span style="display:inline-block;width:15.5px;padding-left:2px;box-sizing:border-box">:</span><span style="letter-spacing:0.3px">www.chanjet.net</span></div>
<div class="wm" style="left:341.5px;top:344.6px">电话<span style="display:inline-block;width:15.5px;padding-left:2px;box-sizing:border-box">:</span><span style="letter-spacing:2.0px">400-665-0028</span><br>网址<span style="display:inline-block;width:15.5px;padding-left:2px;box-sizing:border-box">:</span><span style="letter-spacing:0.3px">www.chanjet.net</span></div>
<div class="wm" style="left:612.5px;top:344.6px">电话<span style="display:inline-block;width:15.5px;padding-left:2px;box-sizing:border-box">:</span><span style="letter-spacing:2.0px">400-665-0028</span><br>网址<span style="display:inline-block;width:15.5px;padding-left:2px;box-sizing:border-box">:</span><span style="letter-spacing:0.3px">www.chanjet.net</span></div>
<div class="wm" style="left:883.5px;top:344.6px">电话<span style="display:inline-block;width:15.5px;padding-left:2px;box-sizing:border-box">:</span><span style="letter-spacing:2.0px">400-665-0028</span><br>网址<span style="display:inline-block;width:15.5px;padding-left:2px;box-sizing:border-box">:</span><span style="letter-spacing:0.3px">www.chanjet.net</span></div>
<div class="wm" style="left:1154.5px;top:344.6px">电话<span style="display:inline-block;width:15.5px;padding-left:2px;box-sizing:border-box">:</span><span style="letter-spacing:2.0px">400-665-0028</span><br>网址<span style="display:inline-block;width:15.5px;padding-left:2px;box-sizing:border-box">:</span><span style="letter-spacing:0.3px">www.chanjet.net</span></div>
<div class="wm" style="left:1425.5px;top:344.6px">电话<span style="display:inline-block;width:15.5px;padding-left:2px;box-sizing:border-box">:</span><span style="letter-spacing:2.0px">400-665-0028</span><br>网址<span style="display:inline-block;width:15.5px;padding-left:2px;box-sizing:border-box">:</span><span style="letter-spacing:0.3px">www.chanjet.net</span></div>
<div class="wm" style="left:1696.5px;top:344.6px">电话<span style="display:inline-block;width:15.5px;padding-left:2px;box-sizing:border-box">:</span><span style="letter-spacing:2.0px">400-665-0028</span><br>网址<span style="display:inline-block;width:15.5px;padding-left:2px;box-sizing:border-box">:</span><span style="letter-spacing:0.3px">www.chanjet.net</span></div>
<div class="wm" style="left:1967.5px;top:344.6px">电话<span style="display:inline-block;width:15.5px;padding-left:2px;box-sizing:border-box">:</span><span style="letter-spacing:2.0px">400-665-0028</span><br>网址<span style="display:inline-block;width:15.5px;padding-left:2px;box-sizing:border-box">:</span><span style="letter-spacing:0.3px">www.chanjet.net</span></div>
<div class="wm" style="left:2238.5px;top:344.6px">电话<span style="display:inline-block;width:15.5px;padding-left:2px;box-sizing:border-box">:</span><span style="letter-spacing:2.0px">400-665-0028</span><br>网址<span style="display:inline-block;width:15.5px;padding-left:2px;box-sizing:border-box">:</span><span style="letter-spacing:0.3px">www.chanjet.net</span></div>
<div class="wm" style="left:2509.5px;top:344.6px">电话<span style="display:inline-block;width:15.5px;padding-left:2px;box-sizing:border-box">:</span><span style="letter-spacing:2.0px">400-665-0028</span><br>网址<span style="display:inline-block;width:15.5px;padding-left:2px;box-sizing:border-box">:</span><span style="letter-spacing:0.3px">www.chanjet.net</span></div>
<div class="wm" style="left:-200.5px;top:454.6px">电话<span style="display:inline-block;width:15.5px;padding-left:2px;box-sizing:border-box">:</span><span style="letter-spacing:2.0px">400-665-0028</span><br>网址<span style="display:inline-block;width:15.5px;padding-left:2px;box-sizing:border-box">:</span><span style="letter-spacing:0.3px">www.chanjet.net</span></div>
<div class="wm" style="left:70.5px;top:454.6px">电话<span style="display:inline-block;width:15.5px;padding-left:2px;box-sizing:border-box">:</span><span style="letter-spacing:2.0px">400-665-0028</span><br>网址<span style="display:inline-block;width:15.5px;padding-left:2px;box-sizing:border-box">:</span><span style="letter-spacing:0.3px">www.chanjet.net</span></div>
<div class="wm" style="left:341.5px;top:454.6px">电话<span style="display:inline-block;width:15.5px;padding-left:2px;box-sizing:border-box">:</span><span style="letter-spacing:2.0px">400-665-0028</span><br>网址<span style="display:inline-block;width:15.5px;padding-left:2px;box-sizing:border-box">:</span><span style="letter-spacing:0.3px">www.chanjet.net</span></div>
<div class="wm" style="left:612.5px;top:454.6px">电话<span style="display:inline-block;width:15.5px;padding-left:2px;box-sizing:border-box">:</span><span style="letter-spacing:2.0px">400-665-0028</span><br>网址<span style="display:inline-block;width:15.5px;padding-left:2px;box-sizing:border-box">:</span><span style="letter-spacing:0.3px">www.chanjet.net</span></div>
<div class="wm" style="left:883.5px;top:454.6px">电话<span style="display:inline-block;width:15.5px;padding-left:2px;box-sizing:border-box">:</span><span style="letter-spacing:2.0px">400-665-0028</span><br>网址<span style="display:inline-block;width:15.5px;padding-left:2px;box-sizing:border-box">:</span><span style="letter-spacing:0.3px">www.chanjet.net</span></div>
<div class="wm" style="left:1154.5px;top:454.6px">电话<span style="display:inline-block;width:15.5px;padding-left:2px;box-sizing:border-box">:</span><span style="letter-spacing:2.0px">400-665-0028</span><br>网址<span style="display:inline-block;width:15.5px;padding-left:2px;box-sizing:border-box">:</span><span style="letter-spacing:0.3px">www.chanjet.net</span></div>
<div class="wm" style="left:1425.5px;top:454.6px">电话<span style="display:inline-block;width:15.5px;padding-left:2px;box-sizing:border-box">:</span><span style="letter-spacing:2.0px">400-665-0028</span><br>网址<span style="display:inline-block;width:15.5px;padding-left:2px;box-sizing:border-box">:</span><span style="letter-spacing:0.3px">www.chanjet.net</span></div>
<div class="wm" style="left:1696.5px;top:454.6px">电话<span style="display:inline-block;width:15.5px;padding-left:2px;box-sizing:border-box">:</span><span style="letter-spacing:2.0px">400-665-0028</span><br>网址<span style="display:inline-block;width:15.5px;padding-left:2px;box-sizing:border-box">:</span><span style="letter-spacing:0.3px">www.chanjet.net</span></div>
<div class="wm" style="left:1967.5px;top:454.6px">电话<span style="display:inline-block;width:15.5px;padding-left:2px;box-sizing:border-box">:</span><span style="letter-spacing:2.0px">400-665-0028</span><br>网址<span style="display:inline-block;width:15.5px;padding-left:2px;box-sizing:border-box">:</span><span style="letter-spacing:0.3px">www.chanjet.net</span></div>
<div class="wm" style="left:2238.5px;top:454.6px">电话<span style="display:inline-block;width:15.5px;padding-left:2px;box-sizing:border-box">:</span><span style="letter-spacing:2.0px">400-665-0028</span><br>网址<span style="display:inline-block;width:15.5px;padding-left:2px;box-sizing:border-box">:</span><span style="letter-spacing:0.3px">www.chanjet.net</span></div>
<div class="wm" style="left:2509.5px;top:454.6px">电话<span style="display:inline-block;width:15.5px;padding-left:2px;box-sizing:border-box">:</span><span style="letter-spacing:2.0px">400-665-0028</span><br>网址<span style="display:inline-block;width:15.5px;padding-left:2px;box-sizing:border-box">:</span><span style="letter-spacing:0.3px">www.chanjet.net</span></div>
<div class="wm" style="left:-200.5px;top:564.6px">电话<span style="display:inline-block;width:15.5px;padding-left:2px;box-sizing:border-box">:</span><span style="letter-spacing:2.0px">400-665-0028</span><br>网址<span style="display:inline-block;width:15.5px;padding-left:2px;box-sizing:border-box">:</span><span style="letter-spacing:0.3px">www.chanjet.net</span></div>
<div class="wm" style="left:70.5px;top:564.6px">电话<span style="display:inline-block;width:15.5px;padding-left:2px;box-sizing:border-box">:</span><span style="letter-spacing:2.0px">400-665-0028</span><br>网址<span style="display:inline-block;width:15.5px;padding-left:2px;box-sizing:border-box">:</span><span style="letter-spacing:0.3px">www.chanjet.net</span></div>
<div class="wm" style="left:341.5px;top:564.6px">电话<span style="display:inline-block;width:15.5px;padding-left:2px;box-sizing:border-box">:</span><span style="letter-spacing:2.0px">400-665-0028</span><br>网址<span style="display:inline-block;width:15.5px;padding-left:2px;box-sizing:border-box">:</span><span style="letter-spacing:0.3px">www.chanjet.net</span></div>
<div class="wm" style="left:612.5px;top:564.6px">电话<span style="display:inline-block;width:15.5px;padding-left:2px;box-sizing:border-box">:</span><span style="letter-spacing:2.0px">400-665-0028</span><br>网址<span style="display:inline-block;width:15.5px;padding-left:2px;box-sizing:border-box">:</span><span style="letter-spacing:0.3px">www.chanjet.net</span></div>
<div class="wm" style="left:883.5px;top:564.6px">电话<span style="display:inline-block;width:15.5px;padding-left:2px;box-sizing:border-box">:</span><span style="letter-spacing:2.0px">400-665-0028</span><br>网址<span style="display:inline-block;width:15.5px;padding-left:2px;box-sizing:border-box">:</span><span style="letter-spacing:0.3px">www.chanjet.net</span></div>
<div class="wm" style="left:1154.5px;top:564.6px">电话<span style="display:inline-block;width:15.5px;padding-left:2px;box-sizing:border-box">:</span><span style="letter-spacing:2.0px">400-665-0028</span><br>网址<span style="display:inline-block;width:15.5px;padding-left:2px;box-sizing:border-box">:</span><span style="letter-spacing:0.3px">www.chanjet.net</span></div>
<div class="wm" style="left:1425.5px;top:564.6px">电话<span style="display:inline-block;width:15.5px;padding-left:2px;box-sizing:border-box">:</span><span style="letter-spacing:2.0px">400-665-0028</span><br>网址<span style="display:inline-block;width:15.5px;padding-left:2px;box-sizing:border-box">:</span><span style="letter-spacing:0.3px">www.chanjet.net</span></div>
<div class="wm" style="left:1696.5px;top:564.6px">电话<span style="display:inline-block;width:15.5px;padding-left:2px;box-sizing:border-box">:</span><span style="letter-spacing:2.0px">400-665-0028</span><br>网址<span style="display:inline-block;width:15.5px;padding-left:2px;box-sizing:border-box">:</span><span style="letter-spacing:0.3px">www.chanjet.net</span></div>
<div class="wm" style="left:1967.5px;top:564.6px">电话<span style="display:inline-block;width:15.5px;padding-left:2px;box-sizing:border-box">:</span><span style="letter-spacing:2.0px">400-665-0028</span><br>网址<span style="display:inline-block;width:15.5px;padding-left:2px;box-sizing:border-box">:</span><span style="letter-spacing:0.3px">www.chanjet.net</span></div>
<div class="wm" style="left:2238.5px;top:564.6px">电话<span style="display:inline-block;width:15.5px;padding-left:2px;box-sizing:border-box">:</span><span style="letter-spacing:2.0px">400-665-0028</span><br>网址<span style="display:inline-block;width:15.5px;padding-left:2px;box-sizing:border-box">:</span><span style="letter-spacing:0.3px">www.chanjet.net</span></div>
<div class="wm" style="left:2509.5px;top:564.6px">电话<span style="display:inline-block;width:15.5px;padding-left:2px;box-sizing:border-box">:</span><span style="letter-spacing:2.0px">400-665-0028</span><br>网址<span style="display:inline-block;width:15.5px;padding-left:2px;box-sizing:border-box">:</span><span style="letter-spacing:0.3px">www.chanjet.net</span></div>
<div class="wm" style="left:-200.5px;top:674.6px">电话<span style="display:inline-block;width:15.5px;padding-left:2px;box-sizing:border-box">:</span><span style="letter-spacing:2.0px">400-665-0028</span><br>网址<span style="display:inline-block;width:15.5px;padding-left:2px;box-sizing:border-box">:</span><span style="letter-spacing:0.3px">www.chanjet.net</span></div>
<div class="wm" style="left:70.5px;top:674.6px">电话<span style="display:inline-block;width:15.5px;padding-left:2px;box-sizing:border-box">:</span><span style="letter-spacing:2.0px">400-665-0028</span><br>网址<span style="display:inline-block;width:15.5px;padding-left:2px;box-sizing:border-box">:</span><span style="letter-spacing:0.3px">www.chanjet.net</span></div>
<div class="wm" style="left:341.5px;top:674.6px">电话<span style="display:inline-block;width:15.5px;padding-left:2px;box-sizing:border-box">:</span><span style="letter-spacing:2.0px">400-665-0028</span><br>网址<span style="display:inline-block;width:15.5px;padding-left:2px;box-sizing:border-box">:</span><span style="letter-spacing:0.3px">www.chanjet.net</span></div>
<div class="wm" style="left:612.5px;top:674.6px">电话<span style="display:inline-block;width:15.5px;padding-left:2px;box-sizing:border-box">:</span><span style="letter-spacing:2.0px">400-665-0028</span><br>网址<span style="display:inline-block;width:15.5px;padding-left:2px;box-sizing:border-box">:</span><span style="letter-spacing:0.3px">www.chanjet.net</span></div>
<div class="wm" style="left:883.5px;top:674.6px">电话<span style="display:inline-block;width:15.5px;padding-left:2px;box-sizing:border-box">:</span><span style="letter-spacing:2.0px">400-665-0028</span><br>网址<span style="display:inline-block;width:15.5px;padding-left:2px;box-sizing:border-box">:</span><span style="letter-spacing:0.3px">www.chanjet.net</span></div>
<div class="wm" style="left:1154.5px;top:674.6px">电话<span style="display:inline-block;width:15.5px;padding-left:2px;box-sizing:border-box">:</span><span style="letter-spacing:2.0px">400-665-0028</span><br>网址<span style="display:inline-block;width:15.5px;padding-left:2px;box-sizing:border-box">:</span><span style="letter-spacing:0.3px">www.chanjet.net</span></div>
<div class="wm" style="left:1425.5px;top:674.6px">电话<span style="display:inline-block;width:15.5px;padding-left:2px;box-sizing:border-box">:</span><span style="letter-spacing:2.0px">400-665-0028</span><br>网址<span style="display:inline-block;width:15.5px;padding-left:2px;box-sizing:border-box">:</span><span style="letter-spacing:0.3px">www.chanjet.net</span></div>
<div class="wm" style="left:1696.5px;top:674.6px">电话<span style="display:inline-block;width:15.5px;padding-left:2px;box-sizing:border-box">:</span><span style="letter-spacing:2.0px">400-665-0028</span><br>网址<span style="display:inline-block;width:15.5px;padding-left:2px;box-sizing:border-box">:</span><span style="letter-spacing:0.3px">www.chanjet.net</span></div>
<div class="wm" style="left:1967.5px;top:674.6px">电话<span style="display:inline-block;width:15.5px;padding-left:2px;box-sizing:border-box">:</span><span style="letter-spacing:2.0px">400-665-0028</span><br>网址<span style="display:inline-block;width:15.5px;padding-left:2px;box-sizing:border-box">:</span><span style="letter-spacing:0.3px">www.chanjet.net</span></div>
<div class="wm" style="left:2238.5px;top:674.6px">电话<span style="display:inline-block;width:15.5px;padding-left:2px;box-sizing:border-box">:</span><span style="letter-spacing:2.0px">400-665-0028</span><br>网址<span style="display:inline-block;width:15.5px;padding-left:2px;box-sizing:border-box">:</span><span style="letter-spacing:0.3px">www.chanjet.net</span></div>
<div class="wm" style="left:2509.5px;top:674.6px">电话<span style="display:inline-block;width:15.5px;padding-left:2px;box-sizing:border-box">:</span><span style="letter-spacing:2.0px">400-665-0028</span><br>网址<span style="display:inline-block;width:15.5px;padding-left:2px;box-sizing:border-box">:</span><span style="letter-spacing:0.3px">www.chanjet.net</span></div>
<div class="wm" style="left:-200.5px;top:784.6px">电话<span style="display:inline-block;width:15.5px;padding-left:2px;box-sizing:border-box">:</span><span style="letter-spacing:2.0px">400-665-0028</span><br>网址<span style="display:inline-block;width:15.5px;padding-left:2px;box-sizing:border-box">:</span><span style="letter-spacing:0.3px">www.chanjet.net</span></div>
<div class="wm" style="left:70.5px;top:784.6px">电话<span style="display:inline-block;width:15.5px;padding-left:2px;box-sizing:border-box">:</span><span style="letter-spacing:2.0px">400-665-0028</span><br>网址<span style="display:inline-block;width:15.5px;padding-left:2px;box-sizing:border-box">:</span><span style="letter-spacing:0.3px">www.chanjet.net</span></div>
<div class="wm" style="left:341.5px;top:784.6px">电话<span style="display:inline-block;width:15.5px;padding-left:2px;box-sizing:border-box">:</span><span style="letter-spacing:2.0px">400-665-0028</span><br>网址<span style="display:inline-block;width:15.5px;padding-left:2px;box-sizing:border-box">:</span><span style="letter-spacing:0.3px">www.chanjet.net</span></div>
<div class="wm" style="left:612.5px;top:784.6px">电话<span style="display:inline-block;width:15.5px;padding-left:2px;box-sizing:border-box">:</span><span style="letter-spacing:2.0px">400-665-0028</span><br>网址<span style="display:inline-block;width:15.5px;padding-left:2px;box-sizing:border-box">:</span><span style="letter-spacing:0.3px">www.chanjet.net</span></div>
<div class="wm" style="left:883.5px;top:784.6px">电话<span style="display:inline-block;width:15.5px;padding-left:2px;box-sizing:border-box">:</span><span style="letter-spacing:2.0px">400-665-0028</span><br>网址<span style="display:inline-block;width:15.5px;padding-left:2px;box-sizing:border-box">:</span><span style="letter-spacing:0.3px">www.chanjet.net</span></div>
<div class="wm" style="left:1154.5px;top:784.6px">电话<span style="display:inline-block;width:15.5px;padding-left:2px;box-sizing:border-box">:</span><span style="letter-spacing:2.0px">400-665-0028</span><br>网址<span style="display:inline-block;width:15.5px;padding-left:2px;box-sizing:border-box">:</span><span style="letter-spacing:0.3px">www.chanjet.net</span></div>
<div class="wm" style="left:1425.5px;top:784.6px">电话<span style="display:inline-block;width:15.5px;padding-left:2px;box-sizing:border-box">:</span><span style="letter-spacing:2.0px">400-665-0028</span><br>网址<span style="display:inline-block;width:15.5px;padding-left:2px;box-sizing:border-box">:</span><span style="letter-spacing:0.3px">www.chanjet.net</span></div>
<div class="wm" style="left:1696.5px;top:784.6px">电话<span style="display:inline-block;width:15.5px;padding-left:2px;box-sizing:border-box">:</span><span style="letter-spacing:2.0px">400-665-0028</span><br>网址<span style="display:inline-block;width:15.5px;padding-left:2px;box-sizing:border-box">:</span><span style="letter-spacing:0.3px">www.chanjet.net</span></div>
<div class="wm" style="left:1967.5px;top:784.6px">电话<span style="display:inline-block;width:15.5px;padding-left:2px;box-sizing:border-box">:</span><span style="letter-spacing:2.0px">400-665-0028</span><br>网址<span style="display:inline-block;width:15.5px;padding-left:2px;box-sizing:border-box">:</span><span style="letter-spacing:0.3px">www.chanjet.net</span></div>
<div class="wm" style="left:2238.5px;top:784.6px">电话<span style="display:inline-block;width:15.5px;padding-left:2px;box-sizing:border-box">:</span><span style="letter-spacing:2.0px">400-665-0028</span><br>网址<span style="display:inline-block;width:15.5px;padding-left:2px;box-sizing:border-box">:</span><span style="letter-spacing:0.3px">www.chanjet.net</span></div>
<div class="wm" style="left:2509.5px;top:784.6px">电话<span style="display:inline-block;width:15.5px;padding-left:2px;box-sizing:border-box">:</span><span style="letter-spacing:2.0px">400-665-0028</span><br>网址<span style="display:inline-block;width:15.5px;padding-left:2px;box-sizing:border-box">:</span><span style="letter-spacing:0.3px">www.chanjet.net</span></div>
<div class="wm" style="left:-200.5px;top:894.6px">电话<span style="display:inline-block;width:15.5px;padding-left:2px;box-sizing:border-box">:</span><span style="letter-spacing:2.0px">400-665-0028</span><br>网址<span style="display:inline-block;width:15.5px;padding-left:2px;box-sizing:border-box">:</span><span style="letter-spacing:0.3px">www.chanjet.net</span></div>
<div class="wm" style="left:70.5px;top:894.6px">电话<span style="display:inline-block;width:15.5px;padding-left:2px;box-sizing:border-box">:</span><span style="letter-spacing:2.0px">400-665-0028</span><br>网址<span style="display:inline-block;width:15.5px;padding-left:2px;box-sizing:border-box">:</span><span style="letter-spacing:0.3px">www.chanjet.net</span></div>
<div class="wm" style="left:341.5px;top:894.6px">电话<span style="display:inline-block;width:15.5px;padding-left:2px;box-sizing:border-box">:</span><span style="letter-spacing:2.0px">400-665-0028</span><br>网址<span style="display:inline-block;width:15.5px;padding-left:2px;box-sizing:border-box">:</span><span style="letter-spacing:0.3px">www.chanjet.net</span></div>
<div class="wm" style="left:612.5px;top:894.6px">电话<span style="display:inline-block;width:15.5px;padding-left:2px;box-sizing:border-box">:</span><span style="letter-spacing:2.0px">400-665-0028</span><br>网址<span style="display:inline-block;width:15.5px;padding-left:2px;box-sizing:border-box">:</span><span style="letter-spacing:0.3px">www.chanjet.net</span></div>
<div class="wm" style="left:883.5px;top:894.6px">电话<span style="display:inline-block;width:15.5px;padding-left:2px;box-sizing:border-box">:</span><span style="letter-spacing:2.0px">400-665-0028</span><br>网址<span style="display:inline-block;width:15.5px;padding-left:2px;box-sizing:border-box">:</span><span style="letter-spacing:0.3px">www.chanjet.net</span></div>
<div class="wm" style="left:1154.5px;top:894.6px">电话<span style="display:inline-block;width:15.5px;padding-left:2px;box-sizing:border-box">:</span><span style="letter-spacing:2.0px">400-665-0028</span><br>网址<span style="display:inline-block;width:15.5px;padding-left:2px;box-sizing:border-box">:</span><span style="letter-spacing:0.3px">www.chanjet.net</span></div>
<div class="wm" style="left:1425.5px;top:894.6px">电话<span style="display:inline-block;width:15.5px;padding-left:2px;box-sizing:border-box">:</span><span style="letter-spacing:2.0px">400-665-0028</span><br>网址<span style="display:inline-block;width:15.5px;padding-left:2px;box-sizing:border-box">:</span><span style="letter-spacing:0.3px">www.chanjet.net</span></div>
<div class="wm" style="left:1696.5px;top:894.6px">电话<span style="display:inline-block;width:15.5px;padding-left:2px;box-sizing:border-box">:</span><span style="letter-spacing:2.0px">400-665-0028</span><br>网址<span style="display:inline-block;width:15.5px;padding-left:2px;box-sizing:border-box">:</span><span style="letter-spacing:0.3px">www.chanjet.net</span></div>
<div class="wm" style="left:1967.5px;top:894.6px">电话<span style="display:inline-block;width:15.5px;padding-left:2px;box-sizing:border-box">:</span><span style="letter-spacing:2.0px">400-665-0028</span><br>网址<span style="display:inline-block;width:15.5px;padding-left:2px;box-sizing:border-box">:</span><span style="letter-spacing:0.3px">www.chanjet.net</span></div>
<div class="wm" style="left:2238.5px;top:894.6px">电话<span style="display:inline-block;width:15.5px;padding-left:2px;box-sizing:border-box">:</span><span style="letter-spacing:2.0px">400-665-0028</span><br>网址<span style="display:inline-block;width:15.5px;padding-left:2px;box-sizing:border-box">:</span><span style="letter-spacing:0.3px">www.chanjet.net</span></div>
<div class="wm" style="left:2509.5px;top:894.6px">电话<span style="display:inline-block;width:15.5px;padding-left:2px;box-sizing:border-box">:</span><span style="letter-spacing:2.0px">400-665-0028</span><br>网址<span style="display:inline-block;width:15.5px;padding-left:2px;box-sizing:border-box">:</span><span style="letter-spacing:0.3px">www.chanjet.net</span></div>
<div class="wm" style="left:-200.5px;top:1004.6px">电话<span style="display:inline-block;width:15.5px;padding-left:2px;box-sizing:border-box">:</span><span style="letter-spacing:2.0px">400-665-0028</span><br>网址<span style="display:inline-block;width:15.5px;padding-left:2px;box-sizing:border-box">:</span><span style="letter-spacing:0.3px">www.chanjet.net</span></div>
<div class="wm" style="left:70.5px;top:1004.6px">电话<span style="display:inline-block;width:15.5px;padding-left:2px;box-sizing:border-box">:</span><span style="letter-spacing:2.0px">400-665-0028</span><br>网址<span style="display:inline-block;width:15.5px;padding-left:2px;box-sizing:border-box">:</span><span style="letter-spacing:0.3px">www.chanjet.net</span></div>
<div class="wm" style="left:341.5px;top:1004.6px">电话<span style="display:inline-block;width:15.5px;padding-left:2px;box-sizing:border-box">:</span><span style="letter-spacing:2.0px">400-665-0028</span><br>网址<span style="display:inline-block;width:15.5px;padding-left:2px;box-sizing:border-box">:</span><span style="letter-spacing:0.3px">www.chanjet.net</span></div>
<div class="wm" style="left:612.5px;top:1004.6px">电话<span style="display:inline-block;width:15.5px;padding-left:2px;box-sizing:border-box">:</span><span style="letter-spacing:2.0px">400-665-0028</span><br>网址<span style="display:inline-block;width:15.5px;padding-left:2px;box-sizing:border-box">:</span><span style="letter-spacing:0.3px">www.chanjet.net</span></div>
<div class="wm" style="left:883.5px;top:1004.6px">电话<span style="display:inline-block;width:15.5px;padding-left:2px;box-sizing:border-box">:</span><span style="letter-spacing:2.0px">400-665-0028</span><br>网址<span style="display:inline-block;width:15.5px;padding-left:2px;box-sizing:border-box">:</span><span style="letter-spacing:0.3px">www.chanjet.net</span></div>
<div class="wm" style="left:1154.5px;top:1004.6px">电话<span style="display:inline-block;width:15.5px;padding-left:2px;box-sizing:border-box">:</span><span style="letter-spacing:2.0px">400-665-0028</span><br>网址<span style="display:inline-block;width:15.5px;padding-left:2px;box-sizing:border-box">:</span><span style="letter-spacing:0.3px">www.chanjet.net</span></div>
<div class="wm" style="left:1425.5px;top:1004.6px">电话<span style="display:inline-block;width:15.5px;padding-left:2px;box-sizing:border-box">:</span><span style="letter-spacing:2.0px">400-665-0028</span><br>网址<span style="display:inline-block;width:15.5px;padding-left:2px;box-sizing:border-box">:</span><span style="letter-spacing:0.3px">www.chanjet.net</span></div>
<div class="wm" style="left:1696.5px;top:1004.6px">电话<span style="display:inline-block;width:15.5px;padding-left:2px;box-sizing:border-box">:</span><span style="letter-spacing:2.0px">400-665-0028</span><br>网址<span style="display:inline-block;width:15.5px;padding-left:2px;box-sizing:border-box">:</span><span style="letter-spacing:0.3px">www.chanjet.net</span></div>
<div class="wm" style="left:1967.5px;top:1004.6px">电话<span style="display:inline-block;width:15.5px;padding-left:2px;box-sizing:border-box">:</span><span style="letter-spacing:2.0px">400-665-0028</span><br>网址<span style="display:inline-block;width:15.5px;padding-left:2px;box-sizing:border-box">:</span><span style="letter-spacing:0.3px">www.chanjet.net</span></div>
<div class="wm" style="left:2238.5px;top:1004.6px">电话<span style="display:inline-block;width:15.5px;padding-left:2px;box-sizing:border-box">:</span><span style="letter-spacing:2.0px">400-665-0028</span><br>网址<span style="display:inline-block;width:15.5px;padding-left:2px;box-sizing:border-box">:</span><span style="letter-spacing:0.3px">www.chanjet.net</span></div>
<div class="wm" style="left:2509.5px;top:1004.6px">电话<span style="display:inline-block;width:15.5px;padding-left:2px;box-sizing:border-box">:</span><span style="letter-spacing:2.0px">400-665-0028</span><br>网址<span style="display:inline-block;width:15.5px;padding-left:2px;box-sizing:border-box">:</span><span style="letter-spacing:0.3px">www.chanjet.net</span></div>
<div class="wm" style="left:-200.5px;top:1114.6px">电话<span style="display:inline-block;width:15.5px;padding-left:2px;box-sizing:border-box">:</span><span style="letter-spacing:2.0px">400-665-0028</span><br>网址<span style="display:inline-block;width:15.5px;padding-left:2px;box-sizing:border-box">:</span><span style="letter-spacing:0.3px">www.chanjet.net</span></div>
<div class="wm" style="left:70.5px;top:1114.6px">电话<span style="display:inline-block;width:15.5px;padding-left:2px;box-sizing:border-box">:</span><span style="letter-spacing:2.0px">400-665-0028</span><br>网址<span style="display:inline-block;width:15.5px;padding-left:2px;box-sizing:border-box">:</span><span style="letter-spacing:0.3px">www.chanjet.net</span></div>
<div class="wm" style="left:341.5px;top:1114.6px">电话<span style="display:inline-block;width:15.5px;padding-left:2px;box-sizing:border-box">:</span><span style="letter-spacing:2.0px">400-665-0028</span><br>网址<span style="display:inline-block;width:15.5px;padding-left:2px;box-sizing:border-box">:</span><span style="letter-spacing:0.3px">www.chanjet.net</span></div>
<div class="wm" style="left:612.5px;top:1114.6px">电话<span style="display:inline-block;width:15.5px;padding-left:2px;box-sizing:border-box">:</span><span style="letter-spacing:2.0px">400-665-0028</span><br>网址<span style="display:inline-block;width:15.5px;padding-left:2px;box-sizing:border-box">:</span><span style="letter-spacing:0.3px">www.chanjet.net</span></div>
<div class="wm" style="left:883.5px;top:1114.6px">电话<span style="display:inline-block;width:15.5px;padding-left:2px;box-sizing:border-box">:</span><span style="letter-spacing:2.0px">400-665-0028</span><br>网址<span style="display:inline-block;width:15.5px;padding-left:2px;box-sizing:border-box">:</span><span style="letter-spacing:0.3px">www.chanjet.net</span></div>
<div class="wm" style="left:1154.5px;top:1114.6px">电话<span style="display:inline-block;width:15.5px;padding-left:2px;box-sizing:border-box">:</span><span style="letter-spacing:2.0px">400-665-0028</span><br>网址<span style="display:inline-block;width:15.5px;padding-left:2px;box-sizing:border-box">:</span><span style="letter-spacing:0.3px">www.chanjet.net</span></div>
<div class="wm" style="left:1425.5px;top:1114.6px">电话<span style="display:inline-block;width:15.5px;padding-left:2px;box-sizing:border-box">:</span><span style="letter-spacing:2.0px">400-665-0028</span><br>网址<span style="display:inline-block;width:15.5px;padding-left:2px;box-sizing:border-box">:</span><span style="letter-spacing:0.3px">www.chanjet.net</span></div>
<div class="wm" style="left:1696.5px;top:1114.6px">电话<span style="display:inline-block;width:15.5px;padding-left:2px;box-sizing:border-box">:</span><span style="letter-spacing:2.0px">400-665-0028</span><br>网址<span style="display:inline-block;width:15.5px;padding-left:2px;box-sizing:border-box">:</span><span style="letter-spacing:0.3px">www.chanjet.net</span></div>
<div class="wm" style="left:1967.5px;top:1114.6px">电话<span style="display:inline-block;width:15.5px;padding-left:2px;box-sizing:border-box">:</span><span style="letter-spacing:2.0px">400-665-0028</span><br>网址<span style="display:inline-block;width:15.5px;padding-left:2px;box-sizing:border-box">:</span><span style="letter-spacing:0.3px">www.chanjet.net</span></div>
<div class="wm" style="left:2238.5px;top:1114.6px">电话<span style="display:inline-block;width:15.5px;padding-left:2px;box-sizing:border-box">:</span><span style="letter-spacing:2.0px">400-665-0028</span><br>网址<span style="display:inline-block;width:15.5px;padding-left:2px;box-sizing:border-box">:</span><span style="letter-spacing:0.3px">www.chanjet.net</span></div>
<div class="wm" style="left:2509.5px;top:1114.6px">电话<span style="display:inline-block;width:15.5px;padding-left:2px;box-sizing:border-box">:</span><span style="letter-spacing:2.0px">400-665-0028</span><br>网址<span style="display:inline-block;width:15.5px;padding-left:2px;box-sizing:border-box">:</span><span style="letter-spacing:0.3px">www.chanjet.net</span></div>
<div class="wm" style="left:-200.5px;top:1224.6px">电话<span style="display:inline-block;width:15.5px;padding-left:2px;box-sizing:border-box">:</span><span style="letter-spacing:2.0px">400-665-0028</span><br>网址<span style="display:inline-block;width:15.5px;padding-left:2px;box-sizing:border-box">:</span><span style="letter-spacing:0.3px">www.chanjet.net</span></div>
<div class="wm" style="left:70.5px;top:1224.6px">电话<span style="display:inline-block;width:15.5px;padding-left:2px;box-sizing:border-box">:</span><span style="letter-spacing:2.0px">400-665-0028</span><br>网址<span style="display:inline-block;width:15.5px;padding-left:2px;box-sizing:border-box">:</span><span style="letter-spacing:0.3px">www.chanjet.net</span></div>
<div class="wm" style="left:341.5px;top:1224.6px">电话<span style="display:inline-block;width:15.5px;padding-left:2px;box-sizing:border-box">:</span><span style="letter-spacing:2.0px">400-665-0028</span><br>网址<span style="display:inline-block;width:15.5px;padding-left:2px;box-sizing:border-box">:</span><span style="letter-spacing:0.3px">www.chanjet.net</span></div>
<div class="wm" style="left:612.5px;top:1224.6px">电话<span style="display:inline-block;width:15.5px;padding-left:2px;box-sizing:border-box">:</span><span style="letter-spacing:2.0px">400-665-0028</span><br>网址<span style="display:inline-block;width:15.5px;padding-left:2px;box-sizing:border-box">:</span><span style="letter-spacing:0.3px">www.chanjet.net</span></div>
<div class="wm" style="left:883.5px;top:1224.6px">电话<span style="display:inline-block;width:15.5px;padding-left:2px;box-sizing:border-box">:</span><span style="letter-spacing:2.0px">400-665-0028</span><br>网址<span style="display:inline-block;width:15.5px;padding-left:2px;box-sizing:border-box">:</span><span style="letter-spacing:0.3px">www.chanjet.net</span></div>
<div class="wm" style="left:1154.5px;top:1224.6px">电话<span style="display:inline-block;width:15.5px;padding-left:2px;box-sizing:border-box">:</span><span style="letter-spacing:2.0px">400-665-0028</span><br>网址<span style="display:inline-block;width:15.5px;padding-left:2px;box-sizing:border-box">:</span><span style="letter-spacing:0.3px">www.chanjet.net</span></div>
<div class="wm" style="left:1425.5px;top:1224.6px">电话<span style="display:inline-block;width:15.5px;padding-left:2px;box-sizing:border-box">:</span><span style="letter-spacing:2.0px">400-665-0028</span><br>网址<span style="display:inline-block;width:15.5px;padding-left:2px;box-sizing:border-box">:</span><span style="letter-spacing:0.3px">www.chanjet.net</span></div>
<div class="wm" style="left:1696.5px;top:1224.6px">电话<span style="display:inline-block;width:15.5px;padding-left:2px;box-sizing:border-box">:</span><span style="letter-spacing:2.0px">400-665-0028</span><br>网址<span style="display:inline-block;width:15.5px;padding-left:2px;box-sizing:border-box">:</span><span style="letter-spacing:0.3px">www.chanjet.net</span></div>
<div class="wm" style="left:1967.5px;top:1224.6px">电话<span style="display:inline-block;width:15.5px;padding-left:2px;box-sizing:border-box">:</span><span style="letter-spacing:2.0px">400-665-0028</span><br>网址<span style="display:inline-block;width:15.5px;padding-left:2px;box-sizing:border-box">:</span><span style="letter-spacing:0.3px">www.chanjet.net</span></div>
<div class="wm" style="left:2238.5px;top:1224.6px">电话<span style="display:inline-block;width:15.5px;padding-left:2px;box-sizing:border-box">:</span><span style="letter-spacing:2.0px">400-665-0028</span><br>网址<span style="display:inline-block;width:15.5px;padding-left:2px;box-sizing:border-box">:</span><span style="letter-spacing:0.3px">www.chanjet.net</span></div>
<div class="wm" style="left:2509.5px;top:1224.6px">电话<span style="display:inline-block;width:15.5px;padding-left:2px;box-sizing:border-box">:</span><span style="letter-spacing:2.0px">400-665-0028</span><br>网址<span style="display:inline-block;width:15.5px;padding-left:2px;box-sizing:border-box">:</span><span style="letter-spacing:0.3px">www.chanjet.net</span></div>
<div class="wm" style="left:-200.5px;top:1334.6px">电话<span style="display:inline-block;width:15.5px;padding-left:2px;box-sizing:border-box">:</span><span style="letter-spacing:2.0px">400-665-0028</span><br>网址<span style="display:inline-block;width:15.5px;padding-left:2px;box-sizing:border-box">:</span><span style="letter-spacing:0.3px">www.chanjet.net</span></div>
<div class="wm" style="left:70.5px;top:1334.6px">电话<span style="display:inline-block;width:15.5px;padding-left:2px;box-sizing:border-box">:</span><span style="letter-spacing:2.0px">400-665-0028</span><br>网址<span style="display:inline-block;width:15.5px;padding-left:2px;box-sizing:border-box">:</span><span style="letter-spacing:0.3px">www.chanjet.net</span></div>
<div class="wm" style="left:341.5px;top:1334.6px">电话<span style="display:inline-block;width:15.5px;padding-left:2px;box-sizing:border-box">:</span><span style="letter-spacing:2.0px">400-665-0028</span><br>网址<span style="display:inline-block;width:15.5px;padding-left:2px;box-sizing:border-box">:</span><span style="letter-spacing:0.3px">www.chanjet.net</span></div>
<div class="wm" style="left:612.5px;top:1334.6px">电话<span style="display:inline-block;width:15.5px;padding-left:2px;box-sizing:border-box">:</span><span style="letter-spacing:2.0px">400-665-0028</span><br>网址<span style="display:inline-block;width:15.5px;padding-left:2px;box-sizing:border-box">:</span><span style="letter-spacing:0.3px">www.chanjet.net</span></div>
<div class="wm" style="left:883.5px;top:1334.6px">电话<span style="display:inline-block;width:15.5px;padding-left:2px;box-sizing:border-box">:</span><span style="letter-spacing:2.0px">400-665-0028</span><br>网址<span style="display:inline-block;width:15.5px;padding-left:2px;box-sizing:border-box">:</span><span style="letter-spacing:0.3px">www.chanjet.net</span></div>
<div class="wm" style="left:1154.5px;top:1334.6px">电话<span style="display:inline-block;width:15.5px;padding-left:2px;box-sizing:border-box">:</span><span style="letter-spacing:2.0px">400-665-0028</span><br>网址<span style="display:inline-block;width:15.5px;padding-left:2px;box-sizing:border-box">:</span><span style="letter-spacing:0.3px">www.chanjet.net</span></div>
<div class="wm" style="left:1425.5px;top:1334.6px">电话<span style="display:inline-block;width:15.5px;padding-left:2px;box-sizing:border-box">:</span><span style="letter-spacing:2.0px">400-665-0028</span><br>网址<span style="display:inline-block;width:15.5px;padding-left:2px;box-sizing:border-box">:</span><span style="letter-spacing:0.3px">www.chanjet.net</span></div>
<div class="wm" style="left:1696.5px;top:1334.6px">电话<span style="display:inline-block;width:15.5px;padding-left:2px;box-sizing:border-box">:</span><span style="letter-spacing:2.0px">400-665-0028</span><br>网址<span style="display:inline-block;width:15.5px;padding-left:2px;box-sizing:border-box">:</span><span style="letter-spacing:0.3px">www.chanjet.net</span></div>
<div class="wm" style="left:1967.5px;top:1334.6px">电话<span style="display:inline-block;width:15.5px;padding-left:2px;box-sizing:border-box">:</span><span style="letter-spacing:2.0px">400-665-0028</span><br>网址<span style="display:inline-block;width:15.5px;padding-left:2px;box-sizing:border-box">:</span><span style="letter-spacing:0.3px">www.chanjet.net</span></div>
<div class="wm" style="left:2238.5px;top:1334.6px">电话<span style="display:inline-block;width:15.5px;padding-left:2px;box-sizing:border-box">:</span><span style="letter-spacing:2.0px">400-665-0028</span><br>网址<span style="display:inline-block;width:15.5px;padding-left:2px;box-sizing:border-box">:</span><span style="letter-spacing:0.3px">www.chanjet.net</span></div>
<div class="wm" style="left:2509.5px;top:1334.6px">电话<span style="display:inline-block;width:15.5px;padding-left:2px;box-sizing:border-box">:</span><span style="letter-spacing:2.0px">400-665-0028</span><br>网址<span style="display:inline-block;width:15.5px;padding-left:2px;box-sizing:border-box">:</span><span style="letter-spacing:0.3px">www.chanjet.net</span></div>
</div>
<div class="wmc" style="left:0;width:230px">
<div class="wm" style="left:29.5px;top:14.6px;color:rgba(0,0,0,0.035);-webkit-text-stroke:0.6px rgba(0,0,0,0.035)">电话<span style="display:inline-block;width:15.5px;padding-left:2px;box-sizing:border-box">:</span><span style="letter-spacing:2.0px">400-665-0028</span><br>网址<span style="display:inline-block;width:15.5px;padding-left:2px;box-sizing:border-box">:</span><span style="letter-spacing:0.3px">www.chanjet.net</span></div>
<div class="wm" style="left:29.5px;top:124.6px;color:rgba(0,0,0,0.035);-webkit-text-stroke:0.6px rgba(0,0,0,0.035)">电话<span style="display:inline-block;width:15.5px;padding-left:2px;box-sizing:border-box">:</span><span style="letter-spacing:2.0px">400-665-0028</span><br>网址<span style="display:inline-block;width:15.5px;padding-left:2px;box-sizing:border-box">:</span><span style="letter-spacing:0.3px">www.chanjet.net</span></div>
<div class="wm" style="left:29.5px;top:234.6px;color:rgba(0,0,0,0.035);-webkit-text-stroke:0.6px rgba(0,0,0,0.035)">电话<span style="display:inline-block;width:15.5px;padding-left:2px;box-sizing:border-box">:</span><span style="letter-spacing:2.0px">400-665-0028</span><br>网址<span style="display:inline-block;width:15.5px;padding-left:2px;box-sizing:border-box">:</span><span style="letter-spacing:0.3px">www.chanjet.net</span></div>
<div class="wm" style="left:29.5px;top:344.6px;color:rgba(0,0,0,0.035);-webkit-text-stroke:0.6px rgba(0,0,0,0.035)">电话<span style="display:inline-block;width:15.5px;padding-left:2px;box-sizing:border-box">:</span><span style="letter-spacing:2.0px">400-665-0028</span><br>网址<span style="display:inline-block;width:15.5px;padding-left:2px;box-sizing:border-box">:</span><span style="letter-spacing:0.3px">www.chanjet.net</span></div>
<div class="wm" style="left:29.5px;top:454.6px;color:rgba(0,0,0,0.035);-webkit-text-stroke:0.6px rgba(0,0,0,0.035)">电话<span style="display:inline-block;width:15.5px;padding-left:2px;box-sizing:border-box">:</span><span style="letter-spacing:2.0px">400-665-0028</span><br>网址<span style="display:inline-block;width:15.5px;padding-left:2px;box-sizing:border-box">:</span><span style="letter-spacing:0.3px">www.chanjet.net</span></div>
<div class="wm" style="left:29.5px;top:564.6px;color:rgba(0,0,0,0.035);-webkit-text-stroke:0.6px rgba(0,0,0,0.035)">电话<span style="display:inline-block;width:15.5px;padding-left:2px;box-sizing:border-box">:</span><span style="letter-spacing:2.0px">400-665-0028</span><br>网址<span style="display:inline-block;width:15.5px;padding-left:2px;box-sizing:border-box">:</span><span style="letter-spacing:0.3px">www.chanjet.net</span></div>
<div class="wm" style="left:29.5px;top:674.6px;color:rgba(0,0,0,0.035);-webkit-text-stroke:0.6px rgba(0,0,0,0.035)">电话<span style="display:inline-block;width:15.5px;padding-left:2px;box-sizing:border-box">:</span><span style="letter-spacing:2.0px">400-665-0028</span><br>网址<span style="display:inline-block;width:15.5px;padding-left:2px;box-sizing:border-box">:</span><span style="letter-spacing:0.3px">www.chanjet.net</span></div>
<div class="wm" style="left:29.5px;top:784.6px;color:rgba(0,0,0,0.035);-webkit-text-stroke:0.6px rgba(0,0,0,0.035)">电话<span style="display:inline-block;width:15.5px;padding-left:2px;box-sizing:border-box">:</span><span style="letter-spacing:2.0px">400-665-0028</span><br>网址<span style="display:inline-block;width:15.5px;padding-left:2px;box-sizing:border-box">:</span><span style="letter-spacing:0.3px">www.chanjet.net</span></div>
<div class="wm" style="left:29.5px;top:894.6px;color:rgba(0,0,0,0.035);-webkit-text-stroke:0.6px rgba(0,0,0,0.035)">电话<span style="display:inline-block;width:15.5px;padding-left:2px;box-sizing:border-box">:</span><span style="letter-spacing:2.0px">400-665-0028</span><br>网址<span style="display:inline-block;width:15.5px;padding-left:2px;box-sizing:border-box">:</span><span style="letter-spacing:0.3px">www.chanjet.net</span></div>
<div class="wm" style="left:29.5px;top:1004.6px;color:rgba(0,0,0,0.035);-webkit-text-stroke:0.6px rgba(0,0,0,0.035)">电话<span style="display:inline-block;width:15.5px;padding-left:2px;box-sizing:border-box">:</span><span style="letter-spacing:2.0px">400-665-0028</span><br>网址<span style="display:inline-block;width:15.5px;padding-left:2px;box-sizing:border-box">:</span><span style="letter-spacing:0.3px">www.chanjet.net</span></div>
<div class="wm" style="left:29.5px;top:1114.6px;color:rgba(0,0,0,0.035);-webkit-text-stroke:0.6px rgba(0,0,0,0.035)">电话<span style="display:inline-block;width:15.5px;padding-left:2px;box-sizing:border-box">:</span><span style="letter-spacing:2.0px">400-665-0028</span><br>网址<span style="display:inline-block;width:15.5px;padding-left:2px;box-sizing:border-box">:</span><span style="letter-spacing:0.3px">www.chanjet.net</span></div>
<div class="wm" style="left:29.5px;top:1224.6px;color:rgba(0,0,0,0.035);-webkit-text-stroke:0.6px rgba(0,0,0,0.035)">电话<span style="display:inline-block;width:15.5px;padding-left:2px;box-sizing:border-box">:</span><span style="letter-spacing:2.0px">400-665-0028</span><br>网址<span style="display:inline-block;width:15.5px;padding-left:2px;box-sizing:border-box">:</span><span style="letter-spacing:0.3px">www.chanjet.net</span></div>
<div class="wm" style="left:29.5px;top:1334.6px;color:rgba(0,0,0,0.035);-webkit-text-stroke:0.6px rgba(0,0,0,0.035)">电话<span style="display:inline-block;width:15.5px;padding-left:2px;box-sizing:border-box">:</span><span style="letter-spacing:2.0px">400-665-0028</span><br>网址<span style="display:inline-block;width:15.5px;padding-left:2px;box-sizing:border-box">:</span><span style="letter-spacing:0.3px">www.chanjet.net</span></div>
</div>
</body></html>
